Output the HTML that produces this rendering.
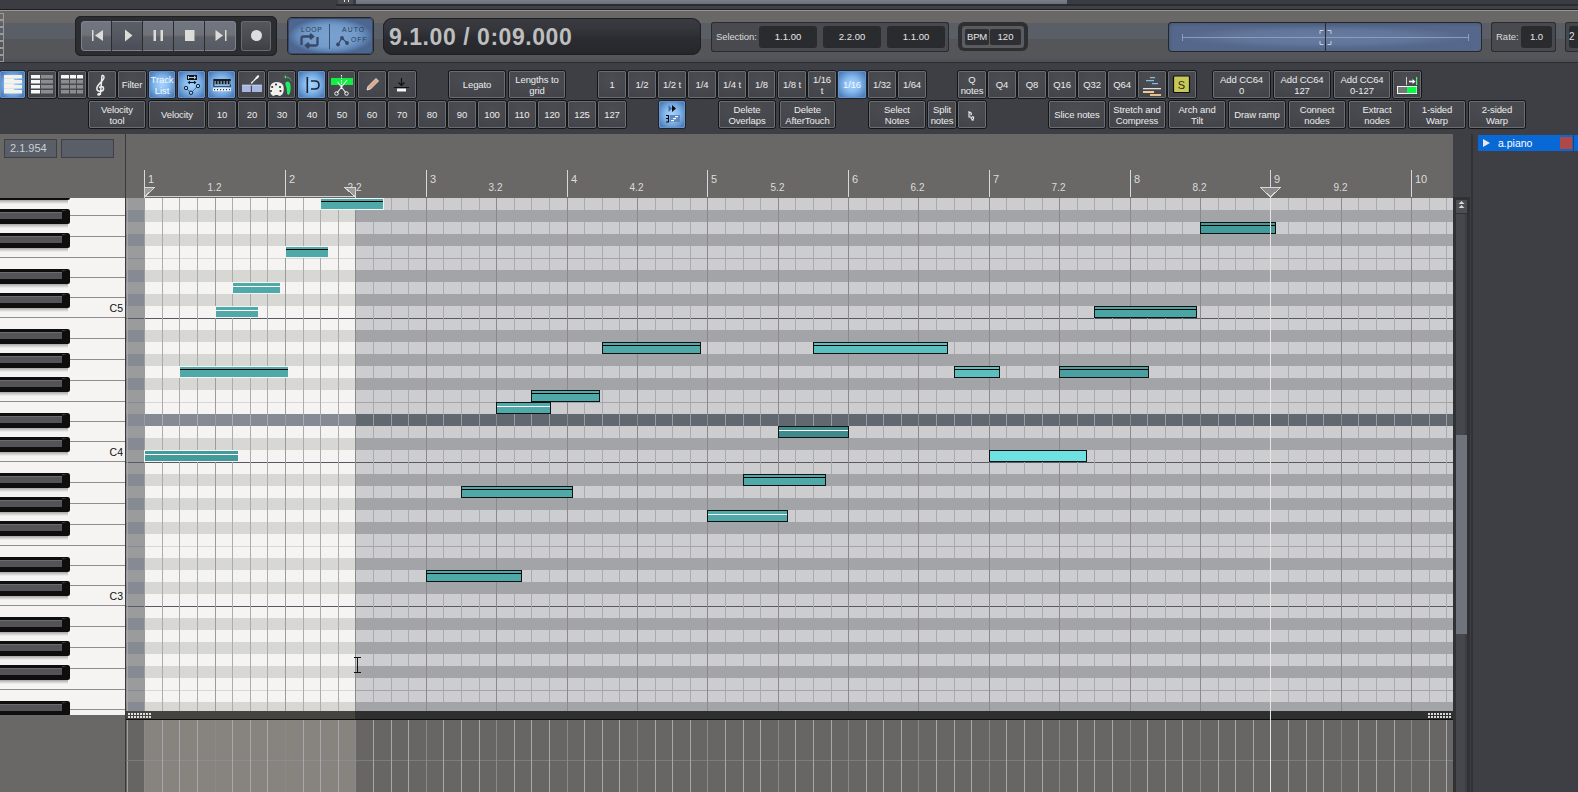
<!DOCTYPE html><html><head><meta charset="utf-8"><style>
*{margin:0;padding:0;box-sizing:border-box}
html,body{width:1578px;height:792px;overflow:hidden;background:#3e3f44;font-family:"Liberation Sans",sans-serif}
div{position:absolute}
.b{background:radial-gradient(ellipse 80% 70% at 50% 30%,#4b4d52 0%,#46484d 60%,#424449 100%);border:1px solid #141517;border-radius:2.5px;box-shadow:inset 0 0 0 1px #686c73;color:#ececec;font-size:9.5px;line-height:11px;letter-spacing:-0.1px;display:flex;align-items:center;justify-content:center;text-align:center;white-space:nowrap}
.b span{display:block}
.act{background:radial-gradient(ellipse 58% 58% at center,#a4d4ff 0%,#88bcf0 45%,#6496d0 80%,#4f7db8 100%);border-color:#1a2230;box-shadow:inset 0 0 0 1px #6a94c8;color:#f4f8ff}
</style></head><body>
<div style="left:0;top:0;width:1578px;height:9px;background:#3c3d42"></div>
<div style="left:336px;top:0;width:1242px;height:9px;background:linear-gradient(#3a3c44 0,#3a3c44 4px,#2b2c31 4px,#2b2c31 6px,#404147 6px)"></div>
<div style="left:0;top:9px;width:1578px;height:1px;background:#1e1f22"></div>
<div style="left:338px;top:0;width:15px;height:4px;background:#4a4c52"></div>
<div style="left:344px;top:0;width:1px;height:2px;background:#e0e0e0"></div><div style="left:348px;top:0;width:1px;height:2px;background:#e0e0e0"></div>
<div style="left:356px;top:0;width:711px;height:4px;background:linear-gradient(#7a7e8a,#6c7078)"></div>
<div style="left:0;top:10px;width:1578px;height:53px;background:linear-gradient(#9a9896 0,#9a9896 1px,#6a6866 1px,#6a6866 13px,#5a5e67 13px,#5a5e67 29px,#555659 29px,#555659 49px,#4e5258 49px,#4e5258 52px,#2a2b2f 52px)"></div>
<div style="left:0;top:63px;width:1578px;height:71px;background:#3e3f44"></div>
<div class="b act" style="left:-1px;top:70px;width:27px;height:29px;"><span></span></div><div class="b" style="left:27px;top:70px;width:30px;height:29px;"><span></span></div><div class="b" style="left:57px;top:70px;width:30px;height:29px;"><span></span></div><div class="b" style="left:87px;top:70px;width:30px;height:29px;"><span></span></div><div class="b" style="left:117px;top:70px;width:30px;height:29px;"><span>Filter</span></div><div class="b act" style="left:148px;top:70px;width:28px;height:29px;"><span>Track<br>List</span></div><div class="b act" style="left:177px;top:70px;width:29px;height:29px;"><span></span></div><div class="b act" style="left:207px;top:70px;width:29px;height:29px;"><span></span></div><div class="b" style="left:237px;top:70px;width:29px;height:29px;"><span></span></div><div class="b" style="left:267px;top:70px;width:29px;height:29px;"><span></span></div><div class="b act" style="left:297px;top:70px;width:29px;height:29px;"><span></span></div><div class="b" style="left:327px;top:70px;width:29px;height:29px;"><span></span></div><div class="b" style="left:357px;top:70px;width:30px;height:29px;"><span></span></div><div class="b" style="left:387px;top:70px;width:30px;height:29px;"><span></span></div><div class="b" style="left:448px;top:70px;width:58px;height:29px;"><span>Legato</span></div><div class="b" style="left:508px;top:70px;width:58px;height:29px;"><span>Lengths to<br>grid</span></div><div class="b" style="left:597px;top:70px;width:30px;height:29px;"><span>1</span></div><div class="b" style="left:627px;top:70px;width:30px;height:29px;"><span>1/2</span></div><div class="b" style="left:657px;top:70px;width:30px;height:29px;"><span>1/2 t</span></div><div class="b" style="left:687px;top:70px;width:30px;height:29px;"><span>1/4</span></div><div class="b" style="left:717px;top:70px;width:30px;height:29px;"><span>1/4 t</span></div><div class="b" style="left:747px;top:70px;width:29px;height:29px;"><span>1/8</span></div><div class="b" style="left:777px;top:70px;width:30px;height:29px;"><span>1/8 t</span></div><div class="b" style="left:807px;top:70px;width:30px;height:29px;"><span>1/16<br>t</span></div><div class="b act" style="left:837px;top:70px;width:30px;height:29px;"><span>1/16</span></div><div class="b" style="left:867px;top:70px;width:30px;height:29px;"><span>1/32</span></div><div class="b" style="left:897px;top:70px;width:30px;height:29px;"><span>1/64</span></div><div class="b" style="left:957px;top:70px;width:30px;height:29px;"><span>Q<br>notes</span></div><div class="b" style="left:987px;top:70px;width:30px;height:29px;"><span>Q4</span></div><div class="b" style="left:1017px;top:70px;width:30px;height:29px;"><span>Q8</span></div><div class="b" style="left:1047px;top:70px;width:30px;height:29px;"><span>Q16</span></div><div class="b" style="left:1077px;top:70px;width:30px;height:29px;"><span>Q32</span></div><div class="b" style="left:1107px;top:70px;width:30px;height:29px;"><span>Q64</span></div><div class="b" style="left:1137px;top:70px;width:30px;height:29px;"><span></span></div><div class="b" style="left:1167px;top:70px;width:30px;height:29px;"><span></span></div><div class="b" style="left:1212px;top:70px;width:59px;height:29px;"><span>Add CC64<br>0</span></div><div class="b" style="left:1273px;top:70px;width:58px;height:29px;"><span>Add CC64<br>127</span></div><div class="b" style="left:1333px;top:70px;width:58px;height:29px;"><span>Add CC64<br>0-127</span></div><div class="b" style="left:1392px;top:70px;width:30px;height:29px;"><span></span></div><div class="b" style="left:88px;top:100px;width:58px;height:29px;"><span>Velocity<br>tool</span></div><div class="b" style="left:148px;top:100px;width:58px;height:29px;"><span>Velocity</span></div><div class="b" style="left:207px;top:100px;width:30px;height:29px;"><span>10</span></div><div class="b" style="left:237px;top:100px;width:30px;height:29px;"><span>20</span></div><div class="b" style="left:267px;top:100px;width:30px;height:29px;"><span>30</span></div><div class="b" style="left:297px;top:100px;width:30px;height:29px;"><span>40</span></div><div class="b" style="left:327px;top:100px;width:30px;height:29px;"><span>50</span></div><div class="b" style="left:357px;top:100px;width:30px;height:29px;"><span>60</span></div><div class="b" style="left:387px;top:100px;width:30px;height:29px;"><span>70</span></div><div class="b" style="left:417px;top:100px;width:30px;height:29px;"><span>80</span></div><div class="b" style="left:447px;top:100px;width:30px;height:29px;"><span>90</span></div><div class="b" style="left:477px;top:100px;width:30px;height:29px;"><span>100</span></div><div class="b" style="left:507px;top:100px;width:30px;height:29px;"><span>110</span></div><div class="b" style="left:537px;top:100px;width:30px;height:29px;"><span>120</span></div><div class="b" style="left:567px;top:100px;width:30px;height:29px;"><span>125</span></div><div class="b" style="left:597px;top:100px;width:30px;height:29px;"><span>127</span></div><div class="b act" style="left:658px;top:100px;width:28px;height:29px;"><span></span></div><div class="b" style="left:718px;top:100px;width:58px;height:29px;"><span>Delete<br>Overlaps</span></div><div class="b" style="left:779px;top:100px;width:57px;height:29px;"><span>Delete<br>AfterTouch</span></div><div class="b" style="left:868px;top:100px;width:58px;height:29px;"><span>Select<br>Notes</span></div><div class="b" style="left:927px;top:100px;width:30px;height:29px;"><span>Split<br>notes</span></div><div class="b" style="left:957px;top:100px;width:30px;height:29px;"><span></span></div><div class="b" style="left:1048px;top:100px;width:58px;height:29px;"><span>Slice notes</span></div><div class="b" style="left:1108px;top:100px;width:58px;height:29px;"><span>Stretch and<br>Compress</span></div><div class="b" style="left:1168px;top:100px;width:58px;height:29px;"><span>Arch and<br>Tilt</span></div><div class="b" style="left:1228px;top:100px;width:58px;height:29px;"><span>Draw ramp</span></div><div class="b" style="left:1288px;top:100px;width:58px;height:29px;"><span>Connect<br>nodes</span></div><div class="b" style="left:1348px;top:100px;width:58px;height:29px;"><span>Extract<br>nodes</span></div><div class="b" style="left:1408px;top:100px;width:58px;height:29px;"><span>1-sided<br>Warp</span></div><div class="b" style="left:1468px;top:100px;width:58px;height:29px;"><span>2-sided<br>Warp</span></div><div style="left:75px;top:16px;width:202px;height:40px;background:#2c2d31;border-radius:6px;box-shadow:inset 0 0 0 1px #1f2023"></div><div style="left:81px;top:21px;width:155px;height:30px;border-radius:4px;background:linear-gradient(#727680 0,#6e727b 45%,#6c6a68 50%,#5c6068 54%,#555961 100%);box-shadow:inset 0 0 0 1px #7e828b"></div><div style="left:112px;top:22px;width:31px;height:28px;background:linear-gradient(#5a5e66 0,#545860 50%,#4a4d55 100%)"></div><div style="left:111px;top:21px;width:1px;height:30px;background:#2a2c31"></div><div style="left:142px;top:21px;width:1px;height:30px;background:#2a2c31"></div><div style="left:173px;top:21px;width:1px;height:30px;background:#2a2c31"></div><div style="left:204px;top:21px;width:1px;height:30px;background:#2a2c31"></div><div style="left:241px;top:21px;width:30px;height:30px;border-radius:3px;background:linear-gradient(#55575c 0,#4a4c51 55%,#3c3e43 100%);box-shadow:inset 0 0 0 1px #666a70"></div><div style="left:288px;top:18px;width:85px;height:36px;border-radius:4px;background:radial-gradient(ellipse 50% 50% at center,#7aa2d0 0%,#739ccb 60%,#6288b8 80%,#4c6690 100%);box-shadow:inset 0 0 0 1px #3a4a66, 0 0 0 1px #24252a"></div><div style="left:329px;top:24px;width:1px;height:25px;background:#3e4e6c"></div><div style="left:383px;top:18px;width:318px;height:37px;border-radius:9px;background:linear-gradient(#3a3c42 0,#34363c 30%,#2a2c31 55%,#25272b 100%);box-shadow:inset 0 0 0 1px #1e1f23"></div><div style="left:389px;top:22px;width:300px;height:30px;font-weight:bold;font-size:23px;line-height:30px;color:#bebebe;white-space:nowrap;letter-spacing:0.55px">9.1.00 / 0:09.000</div><div style="left:711px;top:22px;width:238px;height:30px;border-radius:3px;background:#484a4f;box-shadow:inset 0 0 0 1px #2a2b2f"></div><div style="left:716px;top:22px;width:45px;height:30px;font-size:9.5px;letter-spacing:-0.1px;line-height:30px;color:#dadada">Selection:</div><div style="left:759px;top:26px;width:58px;height:22px;border-radius:3px;background:#2a2b2f;color:#e6e6e6;font-size:9.5px;line-height:22px;text-align:center">1.1.00</div><div style="left:823px;top:26px;width:58px;height:22px;border-radius:3px;background:#2a2b2f;color:#e6e6e6;font-size:9.5px;line-height:22px;text-align:center">2.2.00</div><div style="left:887px;top:26px;width:58px;height:22px;border-radius:3px;background:#2a2b2f;color:#e6e6e6;font-size:9.5px;line-height:22px;text-align:center">1.1.00</div><div style="left:958px;top:22px;width:70px;height:29px;border-radius:6px;background:#2e2f33"></div><div style="left:962px;top:26px;width:62px;height:22px;border-radius:3px;background:#5a5c60"></div><div style="left:965px;top:29px;width:24px;height:16px;border-radius:2px;background:#2e2f33;color:#e6e6e6;font-size:9.5px;letter-spacing:-0.2px;line-height:16px;text-align:center">BPM</div><div style="left:990px;top:29px;width:31px;height:16px;border-radius:2px;background:#2e2f33;color:#e6e6e6;font-size:9.5px;line-height:16px;text-align:center">120</div><div style="left:1168px;top:22px;width:314px;height:30px;border-radius:4px;background:radial-gradient(ellipse 47% 38% at center,#677ba0 0%,#62769b 60%,#5a6d90 85%,#55678a 100%);box-shadow:inset 0 0 0 1px #26272b,inset 2px 2px 3px #485878"></div><div style="left:1182px;top:37px;width:287px;height:1px;background:#8c9cbc"></div><div style="left:1182px;top:34px;width:1px;height:7px;background:#8c9cbc"></div><div style="left:1468px;top:34px;width:1px;height:7px;background:#8c9cbc"></div><div style="left:1325px;top:23px;width:1px;height:29px;background:#2a2b2f"></div><div style="left:1491px;top:22px;width:65px;height:30px;border-radius:3px;background:#484a4f;box-shadow:inset 0 0 0 1px #2a2b2f"></div><div style="left:1496px;top:22px;width:30px;height:30px;font-size:9.5px;line-height:30px;color:#dadada">Rate:</div><div style="left:1521px;top:26px;width:31px;height:22px;border-radius:3px;background:#2a2b2f;color:#e6e6e6;font-size:9.5px;line-height:22px;text-align:center">1.0</div><div style="left:1565px;top:22px;width:20px;height:30px;border-radius:3px;background:#45474c;box-shadow:inset 0 0 0 1px #2a2b2f"></div><div style="left:1569px;top:26px;width:20px;height:22px;border-radius:3px;background:#2a2b2f;color:#e0e0e0;font-size:10px;line-height:22px">2</div><div style="left:1478px;top:135px;width:95px;height:16px;background:#0868d6"></div><div style="left:1560px;top:137px;width:12px;height:12px;background:#b04848"></div><div style="left:1498px;top:135px;width:60px;height:16px;color:#fff;font-size:10.5px;line-height:16px">a.piano</div><div style="left:1574px;top:135px;width:4px;height:16px;background:#0868d6"></div>
<svg width="1578" height="134" style="position:absolute;left:0;top:0" font-family="Liberation Sans, sans-serif"><rect x="-1.5" y="13.5" width="5" height="6" fill="none" stroke="#9a9a9a"/><rect x="-1.5" y="20.5" width="5" height="6" fill="none" stroke="#9a9a9a"/><rect x="-1.5" y="27.5" width="5" height="6" fill="none" stroke="#9a9a9a"/><rect x="-1.5" y="34.5" width="5" height="6" fill="none" stroke="#9a9a9a"/><rect x="-1.5" y="41.5" width="5" height="6" fill="none" stroke="#9a9a9a"/><rect x="-1.5" y="48.5" width="5" height="6" fill="none" stroke="#9a9a9a"/><rect x="-1.5" y="55.5" width="5" height="6" fill="none" stroke="#9a9a9a"/><rect x="92" y="30" width="1.5" height="11" fill="#dcdcd8"/><path d="M95,35.5 L103,30 L103,41 Z" fill="#dcdcd8"/><path d="M125,29.5 L132.5,35.5 L125,41.5 Z" fill="#dcdcd8"/><rect x="153.5" y="30" width="2.5" height="11" fill="#dcdcd8"/><rect x="160.5" y="30" width="2.5" height="11" fill="#dcdcd8"/><rect x="185" y="30" width="9.5" height="11" fill="#dcdcd8"/><path d="M215.5,30 L223,35.5 L215.5,41 Z" fill="#dcdcd8"/><rect x="225" y="30" width="1.5" height="11" fill="#dcdcd8"/><circle cx="256.5" cy="35.5" r="5.5" fill="#dcdce6"/><text x="301" y="32" font-size="6.8" fill="#2e3a52" letter-spacing="0.6">LOOP</text><path d="M301.5,45 L301.5,38.5 Q301.5,36.5 303.5,36.5 L312,36.5 M310,34 L313,36.5 L310,39 M317.5,37 L317.5,43.5 Q317.5,45.5 315.5,45.5 L307,45.5 M309,43 L306,45.5 L309,48" fill="none" stroke="#3a4866" stroke-width="2.3"/><text x="342" y="32" font-size="6.8" fill="#2e3a52" letter-spacing="1.1">AUTO</text><text x="351" y="42" font-size="6.8" fill="#2e3a52" letter-spacing="0.9">OFF</text><path d="M338,44.5 L342,38 L347,43" fill="none" stroke="#3a4866" stroke-width="1.3"/><circle cx="338" cy="44.5" r="1.9" fill="#3a4866"/><circle cx="342" cy="38" r="1.9" fill="#3a4866"/><circle cx="347" cy="43" r="1.9" fill="#3a4866"/><path d="M1320,34 L1320,30.5 L1323.5,30.5 M1327.5,30.5 L1331,30.5 L1331,34 M1331,41 L1331,44.5 L1327.5,44.5 M1323.5,44.5 L1320,44.5 L1320,41" fill="none" stroke="#c8d0e0" stroke-width="1"/><rect x="4" y="75" width="18" height="3.5" fill="#f4f2ec"/><rect x="4" y="78.5" width="10" height="1.5" fill="#f4f2ec"/><rect x="4" y="80" width="18" height="3.5" fill="#f4f2ec"/><rect x="4" y="83.5" width="10" height="1.5" fill="#f4f2ec"/><rect x="4" y="85" width="18" height="3.5" fill="#f4f2ec"/><rect x="4" y="88.5" width="10" height="1.5" fill="#f4f2ec"/><rect x="4" y="90" width="18" height="3.5" fill="#f4f2ec"/><rect x="31" y="75" width="9" height="3.5" fill="#f8f8f8"/><rect x="41" y="75" width="12" height="3.5" fill="#8a8c90"/><rect x="31" y="80" width="9" height="3.5" fill="#f8f8f8"/><rect x="41" y="80" width="12" height="3.5" fill="#8a8c90"/><rect x="31" y="85" width="9" height="3.5" fill="#f8f8f8"/><rect x="41" y="85" width="12" height="3.5" fill="#8a8c90"/><rect x="31" y="90" width="9" height="3.5" fill="#f8f8f8"/><rect x="41" y="90" width="12" height="3.5" fill="#8a8c90"/><rect x="61" y="75" width="8" height="3.5" fill="#f8f8f8"/><rect x="70" y="75" width="6" height="3.5" fill="#f8f8f8"/><rect x="77" y="75" width="6" height="3.5" fill="#f8f8f8"/><rect x="61" y="80" width="8" height="3.5" fill="#8a8c90"/><rect x="70" y="80" width="6" height="3.5" fill="#8a8c90"/><rect x="77" y="80" width="6" height="3.5" fill="#8a8c90"/><rect x="61" y="85" width="8" height="3.5" fill="#8a8c90"/><rect x="70" y="85" width="6" height="3.5" fill="#8a8c90"/><rect x="77" y="85" width="6" height="3.5" fill="#8a8c90"/><rect x="61" y="90" width="8" height="3.5" fill="#8a8c90"/><rect x="70" y="90" width="6" height="3.5" fill="#8a8c90"/><rect x="77" y="90" width="6" height="3.5" fill="#8a8c90"/><path d="M100.3,95 C100.8,90 101.8,80 101.8,77.2 C101.8,74.6 104,74.8 104,77.6 C104,81.2 96.8,84 96.8,88.6 C96.8,92.3 103.6,92.3 103.6,88.6 C103.6,85.9 99.8,85.6 99.4,88.2" fill="none" stroke="#ececec" stroke-width="1.5"/><circle cx="98.8" cy="94.2" r="1.5" fill="#ececec"/><rect x="187" y="75" width="10" height="5" fill="#111"/><path d="M188.5,77.5 L195.5,77.5 M188.5,76 L188.5,79 M194,76 L195.8,77.5 L194,79" stroke="#c8e0f8" stroke-width="0.9" fill="none"/><path d="M188.5,82.5 L195.5,82.5" stroke="#111" stroke-width="1.1"/><path d="M187.5,82.5 L190,80.8 L190,84.2 Z M196.5,82.5 L194,80.8 L194,84.2 Z" fill="#111"/><path d="M187.2,89 L189.8,91.6 M192.3,91.6 L196.8,87.2" fill="none" stroke="#111" stroke-width="0.9" stroke-dasharray="1,0.7"/><circle cx="186" cy="88" r="1.7" fill="#9cccf8" stroke="#111" stroke-width="0.9"/><circle cx="191" cy="92.8" r="1.7" fill="#9cccf8" stroke="#111" stroke-width="0.9"/><circle cx="198" cy="86" r="1.7" fill="#9cccf8" stroke="#111" stroke-width="0.9"/><rect x="213.3" y="79" width="17.5" height="7.7" fill="#1a1c20"/><rect x="214.3" y="84.3" width="15.5" height="1.6" fill="#9cccf8"/><rect x="214.60" y="81" width="1" height="3.5" fill="#9cccf8"/><rect x="217.60" y="81" width="1" height="3.5" fill="#9cccf8"/><rect x="220.60" y="81" width="1" height="3.5" fill="#9cccf8"/><rect x="223.60" y="81" width="1" height="3.5" fill="#9cccf8"/><rect x="226.60" y="81" width="1" height="3.5" fill="#9cccf8"/><rect x="229.60" y="81" width="1" height="3.5" fill="#9cccf8"/><rect x="213" y="88.2" width="18" height="3" fill="#eef4fc"/><circle cx="214.6" cy="89.7" r="0.6" fill="#111"/><circle cx="217.6" cy="89.7" r="0.6" fill="#111"/><circle cx="220.6" cy="89.7" r="0.6" fill="#111"/><circle cx="223.6" cy="89.7" r="0.6" fill="#111"/><circle cx="226.6" cy="89.7" r="0.6" fill="#111"/><circle cx="229.6" cy="89.7" r="0.6" fill="#111"/><rect x="242" y="84.8" width="8.8" height="7.2" fill="#a8b6e2"/><rect x="252" y="84.8" width="10" height="7.2" fill="#a8b6e2"/><rect x="242" y="84.8" width="20" height="0.8" fill="#c8d4f4"/><path d="M251.5,83 L253,81.5 M254,80.5 L258.5,76" stroke="#f4f4f4" stroke-width="1.3" stroke-linecap="round"/><path d="M256,78.5 L258.5,76" stroke="#f4f4f4" stroke-width="2"/><path d="M276.5,82 Q284,82 283.8,89 Q283.5,96 279,96 L278,95 L275,95 L274,96 Q270,96 270,89 Q270,82 276.5,82 Z" fill="#f0f0ec"/><circle cx="276" cy="84.5" r="1.1" fill="#333"/><circle cx="272.2" cy="87" r="1.1" fill="#333"/><circle cx="280" cy="87" r="1.1" fill="#333"/><circle cx="271" cy="91" r="1.1" fill="#333"/><circle cx="280.5" cy="91" r="1.1" fill="#333"/><path d="M286,82 Q290,80 290.5,86 Q291,93 288.5,95 Q287,95.5 287,92 Q287,88 285.5,85 Q285,82.5 286,82 Z" fill="#20f060"/><ellipse cx="285.5" cy="77" rx="0.9" ry="1.4" fill="#40e870"/><circle cx="288" cy="77.5" r="0.7" fill="#40e870"/><circle cx="289.8" cy="78.5" r="0.6" fill="#40e870"/><circle cx="291" cy="80" r="0.6" fill="#40e870"/><rect x="306.5" y="77" width="1.6" height="16" fill="#1c2434"/><path d="M311,81 L315,81 Q319,81 319,85 Q319,89 315,89 L311,89" fill="none" stroke="#1c2434" stroke-width="1.6"/><rect x="331" y="78" width="22" height="7" fill="#10f040"/><path d="M341.5,75 L341.5,89" stroke="#fff" stroke-width="1" stroke-dasharray="1.5,1"/><path d="M337,93 L347,80 M346,93 L337.5,82" stroke="#f0f0f0" stroke-width="1.1"/><circle cx="336.5" cy="93.5" r="1.8" fill="none" stroke="#f0f0f0" stroke-width="1"/><circle cx="346.5" cy="93.5" r="1.8" fill="none" stroke="#f0f0f0" stroke-width="1"/><path d="M367,90 L368,86.5 L376,78.5 L378.5,81 L370.5,89 Z" fill="#e0a888" stroke="#f0f0f0" stroke-width="0.8"/><path d="M401.5,78 L401.5,85 M398.5,82.5 L401.5,85.5 L404.5,82.5" fill="none" stroke="#111" stroke-width="1.2"/><rect x="394" y="87" width="15" height="1" fill="#111"/><rect x="397" y="88.5" width="9" height="3" fill="#f8f8f8"/><rect x="1150" y="77" width="5" height="1.2" fill="#80c0e0"/><rect x="1146" y="80" width="8" height="1.2" fill="#80c0e0"/><rect x="1152" y="83" width="6" height="1.2" fill="#80c0e0"/><rect x="1143" y="88" width="18" height="1.3" fill="#e0e0e0"/><rect x="1143" y="91" width="11" height="2" fill="#f0c890"/><rect x="1150" y="94" width="11" height="2" fill="#e8c090"/><rect x="1173.5" y="76" width="16" height="16.5" rx="1" fill="#c8c858" stroke="#0e0e0e" stroke-width="1.2"/><text x="1181.5" y="89" text-anchor="middle" font-size="11" fill="#2a2a10">S</text><rect x="1406" y="77" width="1" height="8" fill="#d0d0d0"/><path d="M1409,81.5 L1413,81.5" stroke="#f8f8f8" stroke-width="1.6"/><path d="M1412.5,79 L1415.5,81.5 L1412.5,84 Z" fill="#f8f8f8"/><rect x="1416" y="77" width="1.2" height="8" fill="#40ff60"/><rect x="1397.5" y="86.5" width="19" height="7" fill="#777" stroke="#f8f8f8" stroke-width="1"/><rect x="1407" y="87" width="9.5" height="6" fill="#00ff40"/><path d="M668.5,105 L672,108.5 L668.5,112 Z" fill="#4a6a9a"/><path d="M672,105 L676,108.5 L672,112 Z" fill="#0a0a0a"/><path d="M666,115.5 L668.5,115.5 L668.5,122 L666,122 M666,118.5 L668.5,118.5" fill="none" stroke="#0a0a0a" stroke-width="1.2"/><rect x="670" y="115" width="10" height="7" fill="#5f88c0"/><rect x="675" y="116" width="3" height="1.2" fill="#fff"/><rect x="673" y="118" width="3" height="1.2" fill="#fff"/><rect x="671" y="120" width="3" height="1.2" fill="#fff"/><path d="M969,112 L969,117 L971,117 M968.5,111.5 L971,113 Q972,114 970.5,115 M971,119 Q972,116 973.5,117 Q974.5,118.5 971.5,120 L974,120" fill="none" stroke="#f0f0f0" stroke-width="1.1"/><path d="M1483,139 L1490,143 L1483,147 Z" fill="#e8e8e8"/></svg>
<svg width="1578" height="792" style="position:absolute;left:0;top:0" shape-rendering="crispEdges" font-family="Liberation Sans, sans-serif"><defs><linearGradient id="ksh" x1="0" y1="0" x2="0" y2="1"><stop offset="0" stop-color="#a8a8a6"/><stop offset="1" stop-color="#f5f4f2"/></linearGradient></defs><rect x="0" y="134" width="1453" height="64" fill="#6a6866" /><rect x="126" y="198" width="18" height="12" fill="#9a9b9d" /><rect x="144" y="198" width="211" height="12" fill="#f5f4f2" /><rect x="355" y="198" width="1098" height="12" fill="#cdcdd0" /><rect x="126" y="210" width="18" height="12" fill="#858a93" /><rect x="144" y="210" width="211" height="12" fill="#d7d8d3" /><rect x="355" y="210" width="1098" height="12" fill="#a3a4a7" /><rect x="126" y="222" width="18" height="12" fill="#9a9b9d" /><rect x="144" y="222" width="211" height="12" fill="#f5f4f2" /><rect x="355" y="222" width="1098" height="12" fill="#cdcdd0" /><rect x="126" y="234" width="18" height="12" fill="#858a93" /><rect x="144" y="234" width="211" height="12" fill="#d7d8d3" /><rect x="355" y="234" width="1098" height="12" fill="#a3a4a7" /><rect x="126" y="246" width="18" height="12" fill="#9a9b9d" /><rect x="144" y="246" width="211" height="12" fill="#f5f4f2" /><rect x="355" y="246" width="1098" height="12" fill="#cdcdd0" /><rect x="126" y="258" width="18" height="12" fill="#9a9b9d" /><rect x="144" y="258" width="211" height="12" fill="#f5f4f2" /><rect x="355" y="258" width="1098" height="12" fill="#cdcdd0" /><rect x="126" y="270" width="18" height="12" fill="#858a93" /><rect x="144" y="270" width="211" height="12" fill="#d7d8d3" /><rect x="355" y="270" width="1098" height="12" fill="#a3a4a7" /><rect x="126" y="282" width="18" height="12" fill="#9a9b9d" /><rect x="144" y="282" width="211" height="12" fill="#f5f4f2" /><rect x="355" y="282" width="1098" height="12" fill="#cdcdd0" /><rect x="126" y="294" width="18" height="12" fill="#858a93" /><rect x="144" y="294" width="211" height="12" fill="#d7d8d3" /><rect x="355" y="294" width="1098" height="12" fill="#a3a4a7" /><rect x="126" y="306" width="18" height="12" fill="#9a9b9d" /><rect x="144" y="306" width="211" height="12" fill="#f5f4f2" /><rect x="355" y="306" width="1098" height="12" fill="#cdcdd0" /><rect x="126" y="318" width="18" height="12" fill="#9a9b9d" /><rect x="144" y="318" width="211" height="12" fill="#f5f4f2" /><rect x="355" y="318" width="1098" height="12" fill="#cdcdd0" /><rect x="126" y="330" width="18" height="12" fill="#858a93" /><rect x="144" y="330" width="211" height="12" fill="#d7d8d3" /><rect x="355" y="330" width="1098" height="12" fill="#a3a4a7" /><rect x="126" y="342" width="18" height="12" fill="#9a9b9d" /><rect x="144" y="342" width="211" height="12" fill="#f5f4f2" /><rect x="355" y="342" width="1098" height="12" fill="#cdcdd0" /><rect x="126" y="354" width="18" height="12" fill="#858a93" /><rect x="144" y="354" width="211" height="12" fill="#d7d8d3" /><rect x="355" y="354" width="1098" height="12" fill="#a3a4a7" /><rect x="126" y="366" width="18" height="12" fill="#9a9b9d" /><rect x="144" y="366" width="211" height="12" fill="#f5f4f2" /><rect x="355" y="366" width="1098" height="12" fill="#cdcdd0" /><rect x="126" y="378" width="18" height="12" fill="#858a93" /><rect x="144" y="378" width="211" height="12" fill="#d7d8d3" /><rect x="355" y="378" width="1098" height="12" fill="#a3a4a7" /><rect x="126" y="390" width="18" height="12" fill="#9a9b9d" /><rect x="144" y="390" width="211" height="12" fill="#f5f4f2" /><rect x="355" y="390" width="1098" height="12" fill="#cdcdd0" /><rect x="126" y="402" width="18" height="12" fill="#9a9b9d" /><rect x="144" y="402" width="211" height="12" fill="#f5f4f2" /><rect x="355" y="402" width="1098" height="12" fill="#cdcdd0" /><rect x="126" y="414" width="18" height="12" fill="#858a93" /><rect x="144" y="414" width="211" height="12" fill="#858a94" /><rect x="355" y="414" width="1098" height="12" fill="#626870" /><rect x="126" y="426" width="18" height="12" fill="#9a9b9d" /><rect x="144" y="426" width="211" height="12" fill="#f5f4f2" /><rect x="355" y="426" width="1098" height="12" fill="#cdcdd0" /><rect x="126" y="438" width="18" height="12" fill="#858a93" /><rect x="144" y="438" width="211" height="12" fill="#d7d8d3" /><rect x="355" y="438" width="1098" height="12" fill="#a3a4a7" /><rect x="126" y="450" width="18" height="12" fill="#9a9b9d" /><rect x="144" y="450" width="211" height="12" fill="#f5f4f2" /><rect x="355" y="450" width="1098" height="12" fill="#cdcdd0" /><rect x="126" y="462" width="18" height="12" fill="#9a9b9d" /><rect x="144" y="462" width="211" height="12" fill="#f5f4f2" /><rect x="355" y="462" width="1098" height="12" fill="#cdcdd0" /><rect x="126" y="474" width="18" height="12" fill="#858a93" /><rect x="144" y="474" width="211" height="12" fill="#d7d8d3" /><rect x="355" y="474" width="1098" height="12" fill="#a3a4a7" /><rect x="126" y="486" width="18" height="12" fill="#9a9b9d" /><rect x="144" y="486" width="211" height="12" fill="#f5f4f2" /><rect x="355" y="486" width="1098" height="12" fill="#cdcdd0" /><rect x="126" y="498" width="18" height="12" fill="#858a93" /><rect x="144" y="498" width="211" height="12" fill="#d7d8d3" /><rect x="355" y="498" width="1098" height="12" fill="#a3a4a7" /><rect x="126" y="510" width="18" height="12" fill="#9a9b9d" /><rect x="144" y="510" width="211" height="12" fill="#f5f4f2" /><rect x="355" y="510" width="1098" height="12" fill="#cdcdd0" /><rect x="126" y="522" width="18" height="12" fill="#858a93" /><rect x="144" y="522" width="211" height="12" fill="#d7d8d3" /><rect x="355" y="522" width="1098" height="12" fill="#a3a4a7" /><rect x="126" y="534" width="18" height="12" fill="#9a9b9d" /><rect x="144" y="534" width="211" height="12" fill="#f5f4f2" /><rect x="355" y="534" width="1098" height="12" fill="#cdcdd0" /><rect x="126" y="546" width="18" height="12" fill="#9a9b9d" /><rect x="144" y="546" width="211" height="12" fill="#f5f4f2" /><rect x="355" y="546" width="1098" height="12" fill="#cdcdd0" /><rect x="126" y="558" width="18" height="12" fill="#858a93" /><rect x="144" y="558" width="211" height="12" fill="#d7d8d3" /><rect x="355" y="558" width="1098" height="12" fill="#a3a4a7" /><rect x="126" y="570" width="18" height="12" fill="#9a9b9d" /><rect x="144" y="570" width="211" height="12" fill="#f5f4f2" /><rect x="355" y="570" width="1098" height="12" fill="#cdcdd0" /><rect x="126" y="582" width="18" height="12" fill="#858a93" /><rect x="144" y="582" width="211" height="12" fill="#d7d8d3" /><rect x="355" y="582" width="1098" height="12" fill="#a3a4a7" /><rect x="126" y="594" width="18" height="12" fill="#9a9b9d" /><rect x="144" y="594" width="211" height="12" fill="#f5f4f2" /><rect x="355" y="594" width="1098" height="12" fill="#cdcdd0" /><rect x="126" y="606" width="18" height="12" fill="#9a9b9d" /><rect x="144" y="606" width="211" height="12" fill="#f5f4f2" /><rect x="355" y="606" width="1098" height="12" fill="#cdcdd0" /><rect x="126" y="618" width="18" height="12" fill="#858a93" /><rect x="144" y="618" width="211" height="12" fill="#d7d8d3" /><rect x="355" y="618" width="1098" height="12" fill="#a3a4a7" /><rect x="126" y="630" width="18" height="12" fill="#9a9b9d" /><rect x="144" y="630" width="211" height="12" fill="#f5f4f2" /><rect x="355" y="630" width="1098" height="12" fill="#cdcdd0" /><rect x="126" y="642" width="18" height="12" fill="#858a93" /><rect x="144" y="642" width="211" height="12" fill="#d7d8d3" /><rect x="355" y="642" width="1098" height="12" fill="#a3a4a7" /><rect x="126" y="654" width="18" height="12" fill="#9a9b9d" /><rect x="144" y="654" width="211" height="12" fill="#f5f4f2" /><rect x="355" y="654" width="1098" height="12" fill="#cdcdd0" /><rect x="126" y="666" width="18" height="12" fill="#858a93" /><rect x="144" y="666" width="211" height="12" fill="#d7d8d3" /><rect x="355" y="666" width="1098" height="12" fill="#a3a4a7" /><rect x="126" y="678" width="18" height="12" fill="#9a9b9d" /><rect x="144" y="678" width="211" height="12" fill="#f5f4f2" /><rect x="355" y="678" width="1098" height="12" fill="#cdcdd0" /><rect x="126" y="690" width="18" height="12" fill="#9a9b9d" /><rect x="144" y="690" width="211" height="12" fill="#f5f4f2" /><rect x="355" y="690" width="1098" height="12" fill="#cdcdd0" /><rect x="126" y="702" width="18" height="9" fill="#858a93" /><rect x="144" y="702" width="211" height="9" fill="#d7d8d3" /><rect x="355" y="702" width="1098" height="9" fill="#a3a4a7" /><rect x="126" y="258" width="18" height="1" fill="#858a93" /><rect x="144" y="258" width="211" height="1" fill="#d7d8d3" /><rect x="355" y="258" width="1098" height="1" fill="#a3a4a7" /><rect x="126" y="318" width="1327" height="1" fill="#565b63" /><rect x="126" y="402" width="18" height="1" fill="#858a93" /><rect x="144" y="402" width="211" height="1" fill="#d7d8d3" /><rect x="355" y="402" width="1098" height="1" fill="#a3a4a7" /><rect x="126" y="462" width="1327" height="1" fill="#565b63" /><rect x="126" y="546" width="18" height="1" fill="#858a93" /><rect x="144" y="546" width="211" height="1" fill="#d7d8d3" /><rect x="355" y="546" width="1098" height="1" fill="#a3a4a7" /><rect x="126" y="606" width="1327" height="1" fill="#565b63" /><rect x="126" y="690" width="18" height="1" fill="#858a93" /><rect x="144" y="690" width="211" height="1" fill="#d7d8d3" /><rect x="355" y="690" width="1098" height="1" fill="#a3a4a7" /><rect x="127" y="198" width="1" height="513" fill="#a6a6a8" /><rect x="144" y="198" width="1" height="513" fill="#9c9c9c" /><rect x="162" y="198" width="1" height="513" fill="#acacac" /><rect x="179" y="198" width="1" height="513" fill="#acacac" /><rect x="197" y="198" width="1" height="513" fill="#acacac" /><rect x="215" y="198" width="1" height="513" fill="#9c9c9c" /><rect x="232" y="198" width="1" height="513" fill="#acacac" /><rect x="250" y="198" width="1" height="513" fill="#acacac" /><rect x="267" y="198" width="1" height="513" fill="#acacac" /><rect x="285" y="198" width="1" height="513" fill="#9c9c9c" /><rect x="303" y="198" width="1" height="513" fill="#acacac" /><rect x="320" y="198" width="1" height="513" fill="#acacac" /><rect x="338" y="198" width="1" height="513" fill="#acacac" /><rect x="355" y="198" width="1" height="513" fill="#8a8a8c" /><rect x="373" y="198" width="1" height="12" fill="#a9aaae" /><rect x="373" y="222" width="1" height="12" fill="#a9aaae" /><rect x="373" y="246" width="1" height="12" fill="#a9aaae" /><rect x="373" y="258" width="1" height="12" fill="#a9aaae" /><rect x="373" y="282" width="1" height="12" fill="#a9aaae" /><rect x="373" y="306" width="1" height="12" fill="#a9aaae" /><rect x="373" y="318" width="1" height="12" fill="#a9aaae" /><rect x="373" y="342" width="1" height="12" fill="#a9aaae" /><rect x="373" y="366" width="1" height="12" fill="#a9aaae" /><rect x="373" y="390" width="1" height="12" fill="#a9aaae" /><rect x="373" y="402" width="1" height="12" fill="#a9aaae" /><rect x="373" y="414" width="1" height="12" fill="#9a9ca0" /><rect x="373" y="426" width="1" height="12" fill="#a9aaae" /><rect x="373" y="450" width="1" height="12" fill="#a9aaae" /><rect x="373" y="462" width="1" height="12" fill="#a9aaae" /><rect x="373" y="486" width="1" height="12" fill="#a9aaae" /><rect x="373" y="510" width="1" height="12" fill="#a9aaae" /><rect x="373" y="534" width="1" height="12" fill="#a9aaae" /><rect x="373" y="546" width="1" height="12" fill="#a9aaae" /><rect x="373" y="570" width="1" height="12" fill="#a9aaae" /><rect x="373" y="594" width="1" height="12" fill="#a9aaae" /><rect x="373" y="606" width="1" height="12" fill="#a9aaae" /><rect x="373" y="630" width="1" height="12" fill="#a9aaae" /><rect x="373" y="654" width="1" height="12" fill="#a9aaae" /><rect x="373" y="678" width="1" height="12" fill="#a9aaae" /><rect x="373" y="690" width="1" height="12" fill="#a9aaae" /><rect x="391" y="198" width="1" height="12" fill="#a9aaae" /><rect x="391" y="222" width="1" height="12" fill="#a9aaae" /><rect x="391" y="246" width="1" height="12" fill="#a9aaae" /><rect x="391" y="258" width="1" height="12" fill="#a9aaae" /><rect x="391" y="282" width="1" height="12" fill="#a9aaae" /><rect x="391" y="306" width="1" height="12" fill="#a9aaae" /><rect x="391" y="318" width="1" height="12" fill="#a9aaae" /><rect x="391" y="342" width="1" height="12" fill="#a9aaae" /><rect x="391" y="366" width="1" height="12" fill="#a9aaae" /><rect x="391" y="390" width="1" height="12" fill="#a9aaae" /><rect x="391" y="402" width="1" height="12" fill="#a9aaae" /><rect x="391" y="414" width="1" height="12" fill="#9a9ca0" /><rect x="391" y="426" width="1" height="12" fill="#a9aaae" /><rect x="391" y="450" width="1" height="12" fill="#a9aaae" /><rect x="391" y="462" width="1" height="12" fill="#a9aaae" /><rect x="391" y="486" width="1" height="12" fill="#a9aaae" /><rect x="391" y="510" width="1" height="12" fill="#a9aaae" /><rect x="391" y="534" width="1" height="12" fill="#a9aaae" /><rect x="391" y="546" width="1" height="12" fill="#a9aaae" /><rect x="391" y="570" width="1" height="12" fill="#a9aaae" /><rect x="391" y="594" width="1" height="12" fill="#a9aaae" /><rect x="391" y="606" width="1" height="12" fill="#a9aaae" /><rect x="391" y="630" width="1" height="12" fill="#a9aaae" /><rect x="391" y="654" width="1" height="12" fill="#a9aaae" /><rect x="391" y="678" width="1" height="12" fill="#a9aaae" /><rect x="391" y="690" width="1" height="12" fill="#a9aaae" /><rect x="408" y="198" width="1" height="12" fill="#a9aaae" /><rect x="408" y="222" width="1" height="12" fill="#a9aaae" /><rect x="408" y="246" width="1" height="12" fill="#a9aaae" /><rect x="408" y="258" width="1" height="12" fill="#a9aaae" /><rect x="408" y="282" width="1" height="12" fill="#a9aaae" /><rect x="408" y="306" width="1" height="12" fill="#a9aaae" /><rect x="408" y="318" width="1" height="12" fill="#a9aaae" /><rect x="408" y="342" width="1" height="12" fill="#a9aaae" /><rect x="408" y="366" width="1" height="12" fill="#a9aaae" /><rect x="408" y="390" width="1" height="12" fill="#a9aaae" /><rect x="408" y="402" width="1" height="12" fill="#a9aaae" /><rect x="408" y="414" width="1" height="12" fill="#9a9ca0" /><rect x="408" y="426" width="1" height="12" fill="#a9aaae" /><rect x="408" y="450" width="1" height="12" fill="#a9aaae" /><rect x="408" y="462" width="1" height="12" fill="#a9aaae" /><rect x="408" y="486" width="1" height="12" fill="#a9aaae" /><rect x="408" y="510" width="1" height="12" fill="#a9aaae" /><rect x="408" y="534" width="1" height="12" fill="#a9aaae" /><rect x="408" y="546" width="1" height="12" fill="#a9aaae" /><rect x="408" y="570" width="1" height="12" fill="#a9aaae" /><rect x="408" y="594" width="1" height="12" fill="#a9aaae" /><rect x="408" y="606" width="1" height="12" fill="#a9aaae" /><rect x="408" y="630" width="1" height="12" fill="#a9aaae" /><rect x="408" y="654" width="1" height="12" fill="#a9aaae" /><rect x="408" y="678" width="1" height="12" fill="#a9aaae" /><rect x="408" y="690" width="1" height="12" fill="#a9aaae" /><rect x="426" y="198" width="1" height="513" fill="#8a8a8c" /><rect x="443" y="198" width="1" height="12" fill="#a9aaae" /><rect x="443" y="222" width="1" height="12" fill="#a9aaae" /><rect x="443" y="246" width="1" height="12" fill="#a9aaae" /><rect x="443" y="258" width="1" height="12" fill="#a9aaae" /><rect x="443" y="282" width="1" height="12" fill="#a9aaae" /><rect x="443" y="306" width="1" height="12" fill="#a9aaae" /><rect x="443" y="318" width="1" height="12" fill="#a9aaae" /><rect x="443" y="342" width="1" height="12" fill="#a9aaae" /><rect x="443" y="366" width="1" height="12" fill="#a9aaae" /><rect x="443" y="390" width="1" height="12" fill="#a9aaae" /><rect x="443" y="402" width="1" height="12" fill="#a9aaae" /><rect x="443" y="414" width="1" height="12" fill="#9a9ca0" /><rect x="443" y="426" width="1" height="12" fill="#a9aaae" /><rect x="443" y="450" width="1" height="12" fill="#a9aaae" /><rect x="443" y="462" width="1" height="12" fill="#a9aaae" /><rect x="443" y="486" width="1" height="12" fill="#a9aaae" /><rect x="443" y="510" width="1" height="12" fill="#a9aaae" /><rect x="443" y="534" width="1" height="12" fill="#a9aaae" /><rect x="443" y="546" width="1" height="12" fill="#a9aaae" /><rect x="443" y="570" width="1" height="12" fill="#a9aaae" /><rect x="443" y="594" width="1" height="12" fill="#a9aaae" /><rect x="443" y="606" width="1" height="12" fill="#a9aaae" /><rect x="443" y="630" width="1" height="12" fill="#a9aaae" /><rect x="443" y="654" width="1" height="12" fill="#a9aaae" /><rect x="443" y="678" width="1" height="12" fill="#a9aaae" /><rect x="443" y="690" width="1" height="12" fill="#a9aaae" /><rect x="461" y="198" width="1" height="12" fill="#a9aaae" /><rect x="461" y="222" width="1" height="12" fill="#a9aaae" /><rect x="461" y="246" width="1" height="12" fill="#a9aaae" /><rect x="461" y="258" width="1" height="12" fill="#a9aaae" /><rect x="461" y="282" width="1" height="12" fill="#a9aaae" /><rect x="461" y="306" width="1" height="12" fill="#a9aaae" /><rect x="461" y="318" width="1" height="12" fill="#a9aaae" /><rect x="461" y="342" width="1" height="12" fill="#a9aaae" /><rect x="461" y="366" width="1" height="12" fill="#a9aaae" /><rect x="461" y="390" width="1" height="12" fill="#a9aaae" /><rect x="461" y="402" width="1" height="12" fill="#a9aaae" /><rect x="461" y="414" width="1" height="12" fill="#9a9ca0" /><rect x="461" y="426" width="1" height="12" fill="#a9aaae" /><rect x="461" y="450" width="1" height="12" fill="#a9aaae" /><rect x="461" y="462" width="1" height="12" fill="#a9aaae" /><rect x="461" y="486" width="1" height="12" fill="#a9aaae" /><rect x="461" y="510" width="1" height="12" fill="#a9aaae" /><rect x="461" y="534" width="1" height="12" fill="#a9aaae" /><rect x="461" y="546" width="1" height="12" fill="#a9aaae" /><rect x="461" y="570" width="1" height="12" fill="#a9aaae" /><rect x="461" y="594" width="1" height="12" fill="#a9aaae" /><rect x="461" y="606" width="1" height="12" fill="#a9aaae" /><rect x="461" y="630" width="1" height="12" fill="#a9aaae" /><rect x="461" y="654" width="1" height="12" fill="#a9aaae" /><rect x="461" y="678" width="1" height="12" fill="#a9aaae" /><rect x="461" y="690" width="1" height="12" fill="#a9aaae" /><rect x="479" y="198" width="1" height="12" fill="#a9aaae" /><rect x="479" y="222" width="1" height="12" fill="#a9aaae" /><rect x="479" y="246" width="1" height="12" fill="#a9aaae" /><rect x="479" y="258" width="1" height="12" fill="#a9aaae" /><rect x="479" y="282" width="1" height="12" fill="#a9aaae" /><rect x="479" y="306" width="1" height="12" fill="#a9aaae" /><rect x="479" y="318" width="1" height="12" fill="#a9aaae" /><rect x="479" y="342" width="1" height="12" fill="#a9aaae" /><rect x="479" y="366" width="1" height="12" fill="#a9aaae" /><rect x="479" y="390" width="1" height="12" fill="#a9aaae" /><rect x="479" y="402" width="1" height="12" fill="#a9aaae" /><rect x="479" y="414" width="1" height="12" fill="#9a9ca0" /><rect x="479" y="426" width="1" height="12" fill="#a9aaae" /><rect x="479" y="450" width="1" height="12" fill="#a9aaae" /><rect x="479" y="462" width="1" height="12" fill="#a9aaae" /><rect x="479" y="486" width="1" height="12" fill="#a9aaae" /><rect x="479" y="510" width="1" height="12" fill="#a9aaae" /><rect x="479" y="534" width="1" height="12" fill="#a9aaae" /><rect x="479" y="546" width="1" height="12" fill="#a9aaae" /><rect x="479" y="570" width="1" height="12" fill="#a9aaae" /><rect x="479" y="594" width="1" height="12" fill="#a9aaae" /><rect x="479" y="606" width="1" height="12" fill="#a9aaae" /><rect x="479" y="630" width="1" height="12" fill="#a9aaae" /><rect x="479" y="654" width="1" height="12" fill="#a9aaae" /><rect x="479" y="678" width="1" height="12" fill="#a9aaae" /><rect x="479" y="690" width="1" height="12" fill="#a9aaae" /><rect x="496" y="198" width="1" height="513" fill="#8a8a8c" /><rect x="514" y="198" width="1" height="12" fill="#a9aaae" /><rect x="514" y="222" width="1" height="12" fill="#a9aaae" /><rect x="514" y="246" width="1" height="12" fill="#a9aaae" /><rect x="514" y="258" width="1" height="12" fill="#a9aaae" /><rect x="514" y="282" width="1" height="12" fill="#a9aaae" /><rect x="514" y="306" width="1" height="12" fill="#a9aaae" /><rect x="514" y="318" width="1" height="12" fill="#a9aaae" /><rect x="514" y="342" width="1" height="12" fill="#a9aaae" /><rect x="514" y="366" width="1" height="12" fill="#a9aaae" /><rect x="514" y="390" width="1" height="12" fill="#a9aaae" /><rect x="514" y="402" width="1" height="12" fill="#a9aaae" /><rect x="514" y="414" width="1" height="12" fill="#9a9ca0" /><rect x="514" y="426" width="1" height="12" fill="#a9aaae" /><rect x="514" y="450" width="1" height="12" fill="#a9aaae" /><rect x="514" y="462" width="1" height="12" fill="#a9aaae" /><rect x="514" y="486" width="1" height="12" fill="#a9aaae" /><rect x="514" y="510" width="1" height="12" fill="#a9aaae" /><rect x="514" y="534" width="1" height="12" fill="#a9aaae" /><rect x="514" y="546" width="1" height="12" fill="#a9aaae" /><rect x="514" y="570" width="1" height="12" fill="#a9aaae" /><rect x="514" y="594" width="1" height="12" fill="#a9aaae" /><rect x="514" y="606" width="1" height="12" fill="#a9aaae" /><rect x="514" y="630" width="1" height="12" fill="#a9aaae" /><rect x="514" y="654" width="1" height="12" fill="#a9aaae" /><rect x="514" y="678" width="1" height="12" fill="#a9aaae" /><rect x="514" y="690" width="1" height="12" fill="#a9aaae" /><rect x="531" y="198" width="1" height="12" fill="#a9aaae" /><rect x="531" y="222" width="1" height="12" fill="#a9aaae" /><rect x="531" y="246" width="1" height="12" fill="#a9aaae" /><rect x="531" y="258" width="1" height="12" fill="#a9aaae" /><rect x="531" y="282" width="1" height="12" fill="#a9aaae" /><rect x="531" y="306" width="1" height="12" fill="#a9aaae" /><rect x="531" y="318" width="1" height="12" fill="#a9aaae" /><rect x="531" y="342" width="1" height="12" fill="#a9aaae" /><rect x="531" y="366" width="1" height="12" fill="#a9aaae" /><rect x="531" y="390" width="1" height="12" fill="#a9aaae" /><rect x="531" y="402" width="1" height="12" fill="#a9aaae" /><rect x="531" y="414" width="1" height="12" fill="#9a9ca0" /><rect x="531" y="426" width="1" height="12" fill="#a9aaae" /><rect x="531" y="450" width="1" height="12" fill="#a9aaae" /><rect x="531" y="462" width="1" height="12" fill="#a9aaae" /><rect x="531" y="486" width="1" height="12" fill="#a9aaae" /><rect x="531" y="510" width="1" height="12" fill="#a9aaae" /><rect x="531" y="534" width="1" height="12" fill="#a9aaae" /><rect x="531" y="546" width="1" height="12" fill="#a9aaae" /><rect x="531" y="570" width="1" height="12" fill="#a9aaae" /><rect x="531" y="594" width="1" height="12" fill="#a9aaae" /><rect x="531" y="606" width="1" height="12" fill="#a9aaae" /><rect x="531" y="630" width="1" height="12" fill="#a9aaae" /><rect x="531" y="654" width="1" height="12" fill="#a9aaae" /><rect x="531" y="678" width="1" height="12" fill="#a9aaae" /><rect x="531" y="690" width="1" height="12" fill="#a9aaae" /><rect x="549" y="198" width="1" height="12" fill="#a9aaae" /><rect x="549" y="222" width="1" height="12" fill="#a9aaae" /><rect x="549" y="246" width="1" height="12" fill="#a9aaae" /><rect x="549" y="258" width="1" height="12" fill="#a9aaae" /><rect x="549" y="282" width="1" height="12" fill="#a9aaae" /><rect x="549" y="306" width="1" height="12" fill="#a9aaae" /><rect x="549" y="318" width="1" height="12" fill="#a9aaae" /><rect x="549" y="342" width="1" height="12" fill="#a9aaae" /><rect x="549" y="366" width="1" height="12" fill="#a9aaae" /><rect x="549" y="390" width="1" height="12" fill="#a9aaae" /><rect x="549" y="402" width="1" height="12" fill="#a9aaae" /><rect x="549" y="414" width="1" height="12" fill="#9a9ca0" /><rect x="549" y="426" width="1" height="12" fill="#a9aaae" /><rect x="549" y="450" width="1" height="12" fill="#a9aaae" /><rect x="549" y="462" width="1" height="12" fill="#a9aaae" /><rect x="549" y="486" width="1" height="12" fill="#a9aaae" /><rect x="549" y="510" width="1" height="12" fill="#a9aaae" /><rect x="549" y="534" width="1" height="12" fill="#a9aaae" /><rect x="549" y="546" width="1" height="12" fill="#a9aaae" /><rect x="549" y="570" width="1" height="12" fill="#a9aaae" /><rect x="549" y="594" width="1" height="12" fill="#a9aaae" /><rect x="549" y="606" width="1" height="12" fill="#a9aaae" /><rect x="549" y="630" width="1" height="12" fill="#a9aaae" /><rect x="549" y="654" width="1" height="12" fill="#a9aaae" /><rect x="549" y="678" width="1" height="12" fill="#a9aaae" /><rect x="549" y="690" width="1" height="12" fill="#a9aaae" /><rect x="567" y="198" width="1" height="513" fill="#8a8a8c" /><rect x="584" y="198" width="1" height="12" fill="#a9aaae" /><rect x="584" y="222" width="1" height="12" fill="#a9aaae" /><rect x="584" y="246" width="1" height="12" fill="#a9aaae" /><rect x="584" y="258" width="1" height="12" fill="#a9aaae" /><rect x="584" y="282" width="1" height="12" fill="#a9aaae" /><rect x="584" y="306" width="1" height="12" fill="#a9aaae" /><rect x="584" y="318" width="1" height="12" fill="#a9aaae" /><rect x="584" y="342" width="1" height="12" fill="#a9aaae" /><rect x="584" y="366" width="1" height="12" fill="#a9aaae" /><rect x="584" y="390" width="1" height="12" fill="#a9aaae" /><rect x="584" y="402" width="1" height="12" fill="#a9aaae" /><rect x="584" y="414" width="1" height="12" fill="#9a9ca0" /><rect x="584" y="426" width="1" height="12" fill="#a9aaae" /><rect x="584" y="450" width="1" height="12" fill="#a9aaae" /><rect x="584" y="462" width="1" height="12" fill="#a9aaae" /><rect x="584" y="486" width="1" height="12" fill="#a9aaae" /><rect x="584" y="510" width="1" height="12" fill="#a9aaae" /><rect x="584" y="534" width="1" height="12" fill="#a9aaae" /><rect x="584" y="546" width="1" height="12" fill="#a9aaae" /><rect x="584" y="570" width="1" height="12" fill="#a9aaae" /><rect x="584" y="594" width="1" height="12" fill="#a9aaae" /><rect x="584" y="606" width="1" height="12" fill="#a9aaae" /><rect x="584" y="630" width="1" height="12" fill="#a9aaae" /><rect x="584" y="654" width="1" height="12" fill="#a9aaae" /><rect x="584" y="678" width="1" height="12" fill="#a9aaae" /><rect x="584" y="690" width="1" height="12" fill="#a9aaae" /><rect x="602" y="198" width="1" height="12" fill="#a9aaae" /><rect x="602" y="222" width="1" height="12" fill="#a9aaae" /><rect x="602" y="246" width="1" height="12" fill="#a9aaae" /><rect x="602" y="258" width="1" height="12" fill="#a9aaae" /><rect x="602" y="282" width="1" height="12" fill="#a9aaae" /><rect x="602" y="306" width="1" height="12" fill="#a9aaae" /><rect x="602" y="318" width="1" height="12" fill="#a9aaae" /><rect x="602" y="342" width="1" height="12" fill="#a9aaae" /><rect x="602" y="366" width="1" height="12" fill="#a9aaae" /><rect x="602" y="390" width="1" height="12" fill="#a9aaae" /><rect x="602" y="402" width="1" height="12" fill="#a9aaae" /><rect x="602" y="414" width="1" height="12" fill="#9a9ca0" /><rect x="602" y="426" width="1" height="12" fill="#a9aaae" /><rect x="602" y="450" width="1" height="12" fill="#a9aaae" /><rect x="602" y="462" width="1" height="12" fill="#a9aaae" /><rect x="602" y="486" width="1" height="12" fill="#a9aaae" /><rect x="602" y="510" width="1" height="12" fill="#a9aaae" /><rect x="602" y="534" width="1" height="12" fill="#a9aaae" /><rect x="602" y="546" width="1" height="12" fill="#a9aaae" /><rect x="602" y="570" width="1" height="12" fill="#a9aaae" /><rect x="602" y="594" width="1" height="12" fill="#a9aaae" /><rect x="602" y="606" width="1" height="12" fill="#a9aaae" /><rect x="602" y="630" width="1" height="12" fill="#a9aaae" /><rect x="602" y="654" width="1" height="12" fill="#a9aaae" /><rect x="602" y="678" width="1" height="12" fill="#a9aaae" /><rect x="602" y="690" width="1" height="12" fill="#a9aaae" /><rect x="619" y="198" width="1" height="12" fill="#a9aaae" /><rect x="619" y="222" width="1" height="12" fill="#a9aaae" /><rect x="619" y="246" width="1" height="12" fill="#a9aaae" /><rect x="619" y="258" width="1" height="12" fill="#a9aaae" /><rect x="619" y="282" width="1" height="12" fill="#a9aaae" /><rect x="619" y="306" width="1" height="12" fill="#a9aaae" /><rect x="619" y="318" width="1" height="12" fill="#a9aaae" /><rect x="619" y="342" width="1" height="12" fill="#a9aaae" /><rect x="619" y="366" width="1" height="12" fill="#a9aaae" /><rect x="619" y="390" width="1" height="12" fill="#a9aaae" /><rect x="619" y="402" width="1" height="12" fill="#a9aaae" /><rect x="619" y="414" width="1" height="12" fill="#9a9ca0" /><rect x="619" y="426" width="1" height="12" fill="#a9aaae" /><rect x="619" y="450" width="1" height="12" fill="#a9aaae" /><rect x="619" y="462" width="1" height="12" fill="#a9aaae" /><rect x="619" y="486" width="1" height="12" fill="#a9aaae" /><rect x="619" y="510" width="1" height="12" fill="#a9aaae" /><rect x="619" y="534" width="1" height="12" fill="#a9aaae" /><rect x="619" y="546" width="1" height="12" fill="#a9aaae" /><rect x="619" y="570" width="1" height="12" fill="#a9aaae" /><rect x="619" y="594" width="1" height="12" fill="#a9aaae" /><rect x="619" y="606" width="1" height="12" fill="#a9aaae" /><rect x="619" y="630" width="1" height="12" fill="#a9aaae" /><rect x="619" y="654" width="1" height="12" fill="#a9aaae" /><rect x="619" y="678" width="1" height="12" fill="#a9aaae" /><rect x="619" y="690" width="1" height="12" fill="#a9aaae" /><rect x="637" y="198" width="1" height="513" fill="#8a8a8c" /><rect x="655" y="198" width="1" height="12" fill="#a9aaae" /><rect x="655" y="222" width="1" height="12" fill="#a9aaae" /><rect x="655" y="246" width="1" height="12" fill="#a9aaae" /><rect x="655" y="258" width="1" height="12" fill="#a9aaae" /><rect x="655" y="282" width="1" height="12" fill="#a9aaae" /><rect x="655" y="306" width="1" height="12" fill="#a9aaae" /><rect x="655" y="318" width="1" height="12" fill="#a9aaae" /><rect x="655" y="342" width="1" height="12" fill="#a9aaae" /><rect x="655" y="366" width="1" height="12" fill="#a9aaae" /><rect x="655" y="390" width="1" height="12" fill="#a9aaae" /><rect x="655" y="402" width="1" height="12" fill="#a9aaae" /><rect x="655" y="414" width="1" height="12" fill="#9a9ca0" /><rect x="655" y="426" width="1" height="12" fill="#a9aaae" /><rect x="655" y="450" width="1" height="12" fill="#a9aaae" /><rect x="655" y="462" width="1" height="12" fill="#a9aaae" /><rect x="655" y="486" width="1" height="12" fill="#a9aaae" /><rect x="655" y="510" width="1" height="12" fill="#a9aaae" /><rect x="655" y="534" width="1" height="12" fill="#a9aaae" /><rect x="655" y="546" width="1" height="12" fill="#a9aaae" /><rect x="655" y="570" width="1" height="12" fill="#a9aaae" /><rect x="655" y="594" width="1" height="12" fill="#a9aaae" /><rect x="655" y="606" width="1" height="12" fill="#a9aaae" /><rect x="655" y="630" width="1" height="12" fill="#a9aaae" /><rect x="655" y="654" width="1" height="12" fill="#a9aaae" /><rect x="655" y="678" width="1" height="12" fill="#a9aaae" /><rect x="655" y="690" width="1" height="12" fill="#a9aaae" /><rect x="672" y="198" width="1" height="12" fill="#a9aaae" /><rect x="672" y="222" width="1" height="12" fill="#a9aaae" /><rect x="672" y="246" width="1" height="12" fill="#a9aaae" /><rect x="672" y="258" width="1" height="12" fill="#a9aaae" /><rect x="672" y="282" width="1" height="12" fill="#a9aaae" /><rect x="672" y="306" width="1" height="12" fill="#a9aaae" /><rect x="672" y="318" width="1" height="12" fill="#a9aaae" /><rect x="672" y="342" width="1" height="12" fill="#a9aaae" /><rect x="672" y="366" width="1" height="12" fill="#a9aaae" /><rect x="672" y="390" width="1" height="12" fill="#a9aaae" /><rect x="672" y="402" width="1" height="12" fill="#a9aaae" /><rect x="672" y="414" width="1" height="12" fill="#9a9ca0" /><rect x="672" y="426" width="1" height="12" fill="#a9aaae" /><rect x="672" y="450" width="1" height="12" fill="#a9aaae" /><rect x="672" y="462" width="1" height="12" fill="#a9aaae" /><rect x="672" y="486" width="1" height="12" fill="#a9aaae" /><rect x="672" y="510" width="1" height="12" fill="#a9aaae" /><rect x="672" y="534" width="1" height="12" fill="#a9aaae" /><rect x="672" y="546" width="1" height="12" fill="#a9aaae" /><rect x="672" y="570" width="1" height="12" fill="#a9aaae" /><rect x="672" y="594" width="1" height="12" fill="#a9aaae" /><rect x="672" y="606" width="1" height="12" fill="#a9aaae" /><rect x="672" y="630" width="1" height="12" fill="#a9aaae" /><rect x="672" y="654" width="1" height="12" fill="#a9aaae" /><rect x="672" y="678" width="1" height="12" fill="#a9aaae" /><rect x="672" y="690" width="1" height="12" fill="#a9aaae" /><rect x="690" y="198" width="1" height="12" fill="#a9aaae" /><rect x="690" y="222" width="1" height="12" fill="#a9aaae" /><rect x="690" y="246" width="1" height="12" fill="#a9aaae" /><rect x="690" y="258" width="1" height="12" fill="#a9aaae" /><rect x="690" y="282" width="1" height="12" fill="#a9aaae" /><rect x="690" y="306" width="1" height="12" fill="#a9aaae" /><rect x="690" y="318" width="1" height="12" fill="#a9aaae" /><rect x="690" y="342" width="1" height="12" fill="#a9aaae" /><rect x="690" y="366" width="1" height="12" fill="#a9aaae" /><rect x="690" y="390" width="1" height="12" fill="#a9aaae" /><rect x="690" y="402" width="1" height="12" fill="#a9aaae" /><rect x="690" y="414" width="1" height="12" fill="#9a9ca0" /><rect x="690" y="426" width="1" height="12" fill="#a9aaae" /><rect x="690" y="450" width="1" height="12" fill="#a9aaae" /><rect x="690" y="462" width="1" height="12" fill="#a9aaae" /><rect x="690" y="486" width="1" height="12" fill="#a9aaae" /><rect x="690" y="510" width="1" height="12" fill="#a9aaae" /><rect x="690" y="534" width="1" height="12" fill="#a9aaae" /><rect x="690" y="546" width="1" height="12" fill="#a9aaae" /><rect x="690" y="570" width="1" height="12" fill="#a9aaae" /><rect x="690" y="594" width="1" height="12" fill="#a9aaae" /><rect x="690" y="606" width="1" height="12" fill="#a9aaae" /><rect x="690" y="630" width="1" height="12" fill="#a9aaae" /><rect x="690" y="654" width="1" height="12" fill="#a9aaae" /><rect x="690" y="678" width="1" height="12" fill="#a9aaae" /><rect x="690" y="690" width="1" height="12" fill="#a9aaae" /><rect x="707" y="198" width="1" height="513" fill="#8a8a8c" /><rect x="725" y="198" width="1" height="12" fill="#a9aaae" /><rect x="725" y="222" width="1" height="12" fill="#a9aaae" /><rect x="725" y="246" width="1" height="12" fill="#a9aaae" /><rect x="725" y="258" width="1" height="12" fill="#a9aaae" /><rect x="725" y="282" width="1" height="12" fill="#a9aaae" /><rect x="725" y="306" width="1" height="12" fill="#a9aaae" /><rect x="725" y="318" width="1" height="12" fill="#a9aaae" /><rect x="725" y="342" width="1" height="12" fill="#a9aaae" /><rect x="725" y="366" width="1" height="12" fill="#a9aaae" /><rect x="725" y="390" width="1" height="12" fill="#a9aaae" /><rect x="725" y="402" width="1" height="12" fill="#a9aaae" /><rect x="725" y="414" width="1" height="12" fill="#9a9ca0" /><rect x="725" y="426" width="1" height="12" fill="#a9aaae" /><rect x="725" y="450" width="1" height="12" fill="#a9aaae" /><rect x="725" y="462" width="1" height="12" fill="#a9aaae" /><rect x="725" y="486" width="1" height="12" fill="#a9aaae" /><rect x="725" y="510" width="1" height="12" fill="#a9aaae" /><rect x="725" y="534" width="1" height="12" fill="#a9aaae" /><rect x="725" y="546" width="1" height="12" fill="#a9aaae" /><rect x="725" y="570" width="1" height="12" fill="#a9aaae" /><rect x="725" y="594" width="1" height="12" fill="#a9aaae" /><rect x="725" y="606" width="1" height="12" fill="#a9aaae" /><rect x="725" y="630" width="1" height="12" fill="#a9aaae" /><rect x="725" y="654" width="1" height="12" fill="#a9aaae" /><rect x="725" y="678" width="1" height="12" fill="#a9aaae" /><rect x="725" y="690" width="1" height="12" fill="#a9aaae" /><rect x="743" y="198" width="1" height="12" fill="#a9aaae" /><rect x="743" y="222" width="1" height="12" fill="#a9aaae" /><rect x="743" y="246" width="1" height="12" fill="#a9aaae" /><rect x="743" y="258" width="1" height="12" fill="#a9aaae" /><rect x="743" y="282" width="1" height="12" fill="#a9aaae" /><rect x="743" y="306" width="1" height="12" fill="#a9aaae" /><rect x="743" y="318" width="1" height="12" fill="#a9aaae" /><rect x="743" y="342" width="1" height="12" fill="#a9aaae" /><rect x="743" y="366" width="1" height="12" fill="#a9aaae" /><rect x="743" y="390" width="1" height="12" fill="#a9aaae" /><rect x="743" y="402" width="1" height="12" fill="#a9aaae" /><rect x="743" y="414" width="1" height="12" fill="#9a9ca0" /><rect x="743" y="426" width="1" height="12" fill="#a9aaae" /><rect x="743" y="450" width="1" height="12" fill="#a9aaae" /><rect x="743" y="462" width="1" height="12" fill="#a9aaae" /><rect x="743" y="486" width="1" height="12" fill="#a9aaae" /><rect x="743" y="510" width="1" height="12" fill="#a9aaae" /><rect x="743" y="534" width="1" height="12" fill="#a9aaae" /><rect x="743" y="546" width="1" height="12" fill="#a9aaae" /><rect x="743" y="570" width="1" height="12" fill="#a9aaae" /><rect x="743" y="594" width="1" height="12" fill="#a9aaae" /><rect x="743" y="606" width="1" height="12" fill="#a9aaae" /><rect x="743" y="630" width="1" height="12" fill="#a9aaae" /><rect x="743" y="654" width="1" height="12" fill="#a9aaae" /><rect x="743" y="678" width="1" height="12" fill="#a9aaae" /><rect x="743" y="690" width="1" height="12" fill="#a9aaae" /><rect x="760" y="198" width="1" height="12" fill="#a9aaae" /><rect x="760" y="222" width="1" height="12" fill="#a9aaae" /><rect x="760" y="246" width="1" height="12" fill="#a9aaae" /><rect x="760" y="258" width="1" height="12" fill="#a9aaae" /><rect x="760" y="282" width="1" height="12" fill="#a9aaae" /><rect x="760" y="306" width="1" height="12" fill="#a9aaae" /><rect x="760" y="318" width="1" height="12" fill="#a9aaae" /><rect x="760" y="342" width="1" height="12" fill="#a9aaae" /><rect x="760" y="366" width="1" height="12" fill="#a9aaae" /><rect x="760" y="390" width="1" height="12" fill="#a9aaae" /><rect x="760" y="402" width="1" height="12" fill="#a9aaae" /><rect x="760" y="414" width="1" height="12" fill="#9a9ca0" /><rect x="760" y="426" width="1" height="12" fill="#a9aaae" /><rect x="760" y="450" width="1" height="12" fill="#a9aaae" /><rect x="760" y="462" width="1" height="12" fill="#a9aaae" /><rect x="760" y="486" width="1" height="12" fill="#a9aaae" /><rect x="760" y="510" width="1" height="12" fill="#a9aaae" /><rect x="760" y="534" width="1" height="12" fill="#a9aaae" /><rect x="760" y="546" width="1" height="12" fill="#a9aaae" /><rect x="760" y="570" width="1" height="12" fill="#a9aaae" /><rect x="760" y="594" width="1" height="12" fill="#a9aaae" /><rect x="760" y="606" width="1" height="12" fill="#a9aaae" /><rect x="760" y="630" width="1" height="12" fill="#a9aaae" /><rect x="760" y="654" width="1" height="12" fill="#a9aaae" /><rect x="760" y="678" width="1" height="12" fill="#a9aaae" /><rect x="760" y="690" width="1" height="12" fill="#a9aaae" /><rect x="778" y="198" width="1" height="513" fill="#8a8a8c" /><rect x="795" y="198" width="1" height="12" fill="#a9aaae" /><rect x="795" y="222" width="1" height="12" fill="#a9aaae" /><rect x="795" y="246" width="1" height="12" fill="#a9aaae" /><rect x="795" y="258" width="1" height="12" fill="#a9aaae" /><rect x="795" y="282" width="1" height="12" fill="#a9aaae" /><rect x="795" y="306" width="1" height="12" fill="#a9aaae" /><rect x="795" y="318" width="1" height="12" fill="#a9aaae" /><rect x="795" y="342" width="1" height="12" fill="#a9aaae" /><rect x="795" y="366" width="1" height="12" fill="#a9aaae" /><rect x="795" y="390" width="1" height="12" fill="#a9aaae" /><rect x="795" y="402" width="1" height="12" fill="#a9aaae" /><rect x="795" y="414" width="1" height="12" fill="#9a9ca0" /><rect x="795" y="426" width="1" height="12" fill="#a9aaae" /><rect x="795" y="450" width="1" height="12" fill="#a9aaae" /><rect x="795" y="462" width="1" height="12" fill="#a9aaae" /><rect x="795" y="486" width="1" height="12" fill="#a9aaae" /><rect x="795" y="510" width="1" height="12" fill="#a9aaae" /><rect x="795" y="534" width="1" height="12" fill="#a9aaae" /><rect x="795" y="546" width="1" height="12" fill="#a9aaae" /><rect x="795" y="570" width="1" height="12" fill="#a9aaae" /><rect x="795" y="594" width="1" height="12" fill="#a9aaae" /><rect x="795" y="606" width="1" height="12" fill="#a9aaae" /><rect x="795" y="630" width="1" height="12" fill="#a9aaae" /><rect x="795" y="654" width="1" height="12" fill="#a9aaae" /><rect x="795" y="678" width="1" height="12" fill="#a9aaae" /><rect x="795" y="690" width="1" height="12" fill="#a9aaae" /><rect x="813" y="198" width="1" height="12" fill="#a9aaae" /><rect x="813" y="222" width="1" height="12" fill="#a9aaae" /><rect x="813" y="246" width="1" height="12" fill="#a9aaae" /><rect x="813" y="258" width="1" height="12" fill="#a9aaae" /><rect x="813" y="282" width="1" height="12" fill="#a9aaae" /><rect x="813" y="306" width="1" height="12" fill="#a9aaae" /><rect x="813" y="318" width="1" height="12" fill="#a9aaae" /><rect x="813" y="342" width="1" height="12" fill="#a9aaae" /><rect x="813" y="366" width="1" height="12" fill="#a9aaae" /><rect x="813" y="390" width="1" height="12" fill="#a9aaae" /><rect x="813" y="402" width="1" height="12" fill="#a9aaae" /><rect x="813" y="414" width="1" height="12" fill="#9a9ca0" /><rect x="813" y="426" width="1" height="12" fill="#a9aaae" /><rect x="813" y="450" width="1" height="12" fill="#a9aaae" /><rect x="813" y="462" width="1" height="12" fill="#a9aaae" /><rect x="813" y="486" width="1" height="12" fill="#a9aaae" /><rect x="813" y="510" width="1" height="12" fill="#a9aaae" /><rect x="813" y="534" width="1" height="12" fill="#a9aaae" /><rect x="813" y="546" width="1" height="12" fill="#a9aaae" /><rect x="813" y="570" width="1" height="12" fill="#a9aaae" /><rect x="813" y="594" width="1" height="12" fill="#a9aaae" /><rect x="813" y="606" width="1" height="12" fill="#a9aaae" /><rect x="813" y="630" width="1" height="12" fill="#a9aaae" /><rect x="813" y="654" width="1" height="12" fill="#a9aaae" /><rect x="813" y="678" width="1" height="12" fill="#a9aaae" /><rect x="813" y="690" width="1" height="12" fill="#a9aaae" /><rect x="831" y="198" width="1" height="12" fill="#a9aaae" /><rect x="831" y="222" width="1" height="12" fill="#a9aaae" /><rect x="831" y="246" width="1" height="12" fill="#a9aaae" /><rect x="831" y="258" width="1" height="12" fill="#a9aaae" /><rect x="831" y="282" width="1" height="12" fill="#a9aaae" /><rect x="831" y="306" width="1" height="12" fill="#a9aaae" /><rect x="831" y="318" width="1" height="12" fill="#a9aaae" /><rect x="831" y="342" width="1" height="12" fill="#a9aaae" /><rect x="831" y="366" width="1" height="12" fill="#a9aaae" /><rect x="831" y="390" width="1" height="12" fill="#a9aaae" /><rect x="831" y="402" width="1" height="12" fill="#a9aaae" /><rect x="831" y="414" width="1" height="12" fill="#9a9ca0" /><rect x="831" y="426" width="1" height="12" fill="#a9aaae" /><rect x="831" y="450" width="1" height="12" fill="#a9aaae" /><rect x="831" y="462" width="1" height="12" fill="#a9aaae" /><rect x="831" y="486" width="1" height="12" fill="#a9aaae" /><rect x="831" y="510" width="1" height="12" fill="#a9aaae" /><rect x="831" y="534" width="1" height="12" fill="#a9aaae" /><rect x="831" y="546" width="1" height="12" fill="#a9aaae" /><rect x="831" y="570" width="1" height="12" fill="#a9aaae" /><rect x="831" y="594" width="1" height="12" fill="#a9aaae" /><rect x="831" y="606" width="1" height="12" fill="#a9aaae" /><rect x="831" y="630" width="1" height="12" fill="#a9aaae" /><rect x="831" y="654" width="1" height="12" fill="#a9aaae" /><rect x="831" y="678" width="1" height="12" fill="#a9aaae" /><rect x="831" y="690" width="1" height="12" fill="#a9aaae" /><rect x="848" y="198" width="1" height="513" fill="#8a8a8c" /><rect x="866" y="198" width="1" height="12" fill="#a9aaae" /><rect x="866" y="222" width="1" height="12" fill="#a9aaae" /><rect x="866" y="246" width="1" height="12" fill="#a9aaae" /><rect x="866" y="258" width="1" height="12" fill="#a9aaae" /><rect x="866" y="282" width="1" height="12" fill="#a9aaae" /><rect x="866" y="306" width="1" height="12" fill="#a9aaae" /><rect x="866" y="318" width="1" height="12" fill="#a9aaae" /><rect x="866" y="342" width="1" height="12" fill="#a9aaae" /><rect x="866" y="366" width="1" height="12" fill="#a9aaae" /><rect x="866" y="390" width="1" height="12" fill="#a9aaae" /><rect x="866" y="402" width="1" height="12" fill="#a9aaae" /><rect x="866" y="414" width="1" height="12" fill="#9a9ca0" /><rect x="866" y="426" width="1" height="12" fill="#a9aaae" /><rect x="866" y="450" width="1" height="12" fill="#a9aaae" /><rect x="866" y="462" width="1" height="12" fill="#a9aaae" /><rect x="866" y="486" width="1" height="12" fill="#a9aaae" /><rect x="866" y="510" width="1" height="12" fill="#a9aaae" /><rect x="866" y="534" width="1" height="12" fill="#a9aaae" /><rect x="866" y="546" width="1" height="12" fill="#a9aaae" /><rect x="866" y="570" width="1" height="12" fill="#a9aaae" /><rect x="866" y="594" width="1" height="12" fill="#a9aaae" /><rect x="866" y="606" width="1" height="12" fill="#a9aaae" /><rect x="866" y="630" width="1" height="12" fill="#a9aaae" /><rect x="866" y="654" width="1" height="12" fill="#a9aaae" /><rect x="866" y="678" width="1" height="12" fill="#a9aaae" /><rect x="866" y="690" width="1" height="12" fill="#a9aaae" /><rect x="883" y="198" width="1" height="12" fill="#a9aaae" /><rect x="883" y="222" width="1" height="12" fill="#a9aaae" /><rect x="883" y="246" width="1" height="12" fill="#a9aaae" /><rect x="883" y="258" width="1" height="12" fill="#a9aaae" /><rect x="883" y="282" width="1" height="12" fill="#a9aaae" /><rect x="883" y="306" width="1" height="12" fill="#a9aaae" /><rect x="883" y="318" width="1" height="12" fill="#a9aaae" /><rect x="883" y="342" width="1" height="12" fill="#a9aaae" /><rect x="883" y="366" width="1" height="12" fill="#a9aaae" /><rect x="883" y="390" width="1" height="12" fill="#a9aaae" /><rect x="883" y="402" width="1" height="12" fill="#a9aaae" /><rect x="883" y="414" width="1" height="12" fill="#9a9ca0" /><rect x="883" y="426" width="1" height="12" fill="#a9aaae" /><rect x="883" y="450" width="1" height="12" fill="#a9aaae" /><rect x="883" y="462" width="1" height="12" fill="#a9aaae" /><rect x="883" y="486" width="1" height="12" fill="#a9aaae" /><rect x="883" y="510" width="1" height="12" fill="#a9aaae" /><rect x="883" y="534" width="1" height="12" fill="#a9aaae" /><rect x="883" y="546" width="1" height="12" fill="#a9aaae" /><rect x="883" y="570" width="1" height="12" fill="#a9aaae" /><rect x="883" y="594" width="1" height="12" fill="#a9aaae" /><rect x="883" y="606" width="1" height="12" fill="#a9aaae" /><rect x="883" y="630" width="1" height="12" fill="#a9aaae" /><rect x="883" y="654" width="1" height="12" fill="#a9aaae" /><rect x="883" y="678" width="1" height="12" fill="#a9aaae" /><rect x="883" y="690" width="1" height="12" fill="#a9aaae" /><rect x="901" y="198" width="1" height="12" fill="#a9aaae" /><rect x="901" y="222" width="1" height="12" fill="#a9aaae" /><rect x="901" y="246" width="1" height="12" fill="#a9aaae" /><rect x="901" y="258" width="1" height="12" fill="#a9aaae" /><rect x="901" y="282" width="1" height="12" fill="#a9aaae" /><rect x="901" y="306" width="1" height="12" fill="#a9aaae" /><rect x="901" y="318" width="1" height="12" fill="#a9aaae" /><rect x="901" y="342" width="1" height="12" fill="#a9aaae" /><rect x="901" y="366" width="1" height="12" fill="#a9aaae" /><rect x="901" y="390" width="1" height="12" fill="#a9aaae" /><rect x="901" y="402" width="1" height="12" fill="#a9aaae" /><rect x="901" y="414" width="1" height="12" fill="#9a9ca0" /><rect x="901" y="426" width="1" height="12" fill="#a9aaae" /><rect x="901" y="450" width="1" height="12" fill="#a9aaae" /><rect x="901" y="462" width="1" height="12" fill="#a9aaae" /><rect x="901" y="486" width="1" height="12" fill="#a9aaae" /><rect x="901" y="510" width="1" height="12" fill="#a9aaae" /><rect x="901" y="534" width="1" height="12" fill="#a9aaae" /><rect x="901" y="546" width="1" height="12" fill="#a9aaae" /><rect x="901" y="570" width="1" height="12" fill="#a9aaae" /><rect x="901" y="594" width="1" height="12" fill="#a9aaae" /><rect x="901" y="606" width="1" height="12" fill="#a9aaae" /><rect x="901" y="630" width="1" height="12" fill="#a9aaae" /><rect x="901" y="654" width="1" height="12" fill="#a9aaae" /><rect x="901" y="678" width="1" height="12" fill="#a9aaae" /><rect x="901" y="690" width="1" height="12" fill="#a9aaae" /><rect x="918" y="198" width="1" height="513" fill="#8a8a8c" /><rect x="936" y="198" width="1" height="12" fill="#a9aaae" /><rect x="936" y="222" width="1" height="12" fill="#a9aaae" /><rect x="936" y="246" width="1" height="12" fill="#a9aaae" /><rect x="936" y="258" width="1" height="12" fill="#a9aaae" /><rect x="936" y="282" width="1" height="12" fill="#a9aaae" /><rect x="936" y="306" width="1" height="12" fill="#a9aaae" /><rect x="936" y="318" width="1" height="12" fill="#a9aaae" /><rect x="936" y="342" width="1" height="12" fill="#a9aaae" /><rect x="936" y="366" width="1" height="12" fill="#a9aaae" /><rect x="936" y="390" width="1" height="12" fill="#a9aaae" /><rect x="936" y="402" width="1" height="12" fill="#a9aaae" /><rect x="936" y="414" width="1" height="12" fill="#9a9ca0" /><rect x="936" y="426" width="1" height="12" fill="#a9aaae" /><rect x="936" y="450" width="1" height="12" fill="#a9aaae" /><rect x="936" y="462" width="1" height="12" fill="#a9aaae" /><rect x="936" y="486" width="1" height="12" fill="#a9aaae" /><rect x="936" y="510" width="1" height="12" fill="#a9aaae" /><rect x="936" y="534" width="1" height="12" fill="#a9aaae" /><rect x="936" y="546" width="1" height="12" fill="#a9aaae" /><rect x="936" y="570" width="1" height="12" fill="#a9aaae" /><rect x="936" y="594" width="1" height="12" fill="#a9aaae" /><rect x="936" y="606" width="1" height="12" fill="#a9aaae" /><rect x="936" y="630" width="1" height="12" fill="#a9aaae" /><rect x="936" y="654" width="1" height="12" fill="#a9aaae" /><rect x="936" y="678" width="1" height="12" fill="#a9aaae" /><rect x="936" y="690" width="1" height="12" fill="#a9aaae" /><rect x="954" y="198" width="1" height="12" fill="#a9aaae" /><rect x="954" y="222" width="1" height="12" fill="#a9aaae" /><rect x="954" y="246" width="1" height="12" fill="#a9aaae" /><rect x="954" y="258" width="1" height="12" fill="#a9aaae" /><rect x="954" y="282" width="1" height="12" fill="#a9aaae" /><rect x="954" y="306" width="1" height="12" fill="#a9aaae" /><rect x="954" y="318" width="1" height="12" fill="#a9aaae" /><rect x="954" y="342" width="1" height="12" fill="#a9aaae" /><rect x="954" y="366" width="1" height="12" fill="#a9aaae" /><rect x="954" y="390" width="1" height="12" fill="#a9aaae" /><rect x="954" y="402" width="1" height="12" fill="#a9aaae" /><rect x="954" y="414" width="1" height="12" fill="#9a9ca0" /><rect x="954" y="426" width="1" height="12" fill="#a9aaae" /><rect x="954" y="450" width="1" height="12" fill="#a9aaae" /><rect x="954" y="462" width="1" height="12" fill="#a9aaae" /><rect x="954" y="486" width="1" height="12" fill="#a9aaae" /><rect x="954" y="510" width="1" height="12" fill="#a9aaae" /><rect x="954" y="534" width="1" height="12" fill="#a9aaae" /><rect x="954" y="546" width="1" height="12" fill="#a9aaae" /><rect x="954" y="570" width="1" height="12" fill="#a9aaae" /><rect x="954" y="594" width="1" height="12" fill="#a9aaae" /><rect x="954" y="606" width="1" height="12" fill="#a9aaae" /><rect x="954" y="630" width="1" height="12" fill="#a9aaae" /><rect x="954" y="654" width="1" height="12" fill="#a9aaae" /><rect x="954" y="678" width="1" height="12" fill="#a9aaae" /><rect x="954" y="690" width="1" height="12" fill="#a9aaae" /><rect x="971" y="198" width="1" height="12" fill="#a9aaae" /><rect x="971" y="222" width="1" height="12" fill="#a9aaae" /><rect x="971" y="246" width="1" height="12" fill="#a9aaae" /><rect x="971" y="258" width="1" height="12" fill="#a9aaae" /><rect x="971" y="282" width="1" height="12" fill="#a9aaae" /><rect x="971" y="306" width="1" height="12" fill="#a9aaae" /><rect x="971" y="318" width="1" height="12" fill="#a9aaae" /><rect x="971" y="342" width="1" height="12" fill="#a9aaae" /><rect x="971" y="366" width="1" height="12" fill="#a9aaae" /><rect x="971" y="390" width="1" height="12" fill="#a9aaae" /><rect x="971" y="402" width="1" height="12" fill="#a9aaae" /><rect x="971" y="414" width="1" height="12" fill="#9a9ca0" /><rect x="971" y="426" width="1" height="12" fill="#a9aaae" /><rect x="971" y="450" width="1" height="12" fill="#a9aaae" /><rect x="971" y="462" width="1" height="12" fill="#a9aaae" /><rect x="971" y="486" width="1" height="12" fill="#a9aaae" /><rect x="971" y="510" width="1" height="12" fill="#a9aaae" /><rect x="971" y="534" width="1" height="12" fill="#a9aaae" /><rect x="971" y="546" width="1" height="12" fill="#a9aaae" /><rect x="971" y="570" width="1" height="12" fill="#a9aaae" /><rect x="971" y="594" width="1" height="12" fill="#a9aaae" /><rect x="971" y="606" width="1" height="12" fill="#a9aaae" /><rect x="971" y="630" width="1" height="12" fill="#a9aaae" /><rect x="971" y="654" width="1" height="12" fill="#a9aaae" /><rect x="971" y="678" width="1" height="12" fill="#a9aaae" /><rect x="971" y="690" width="1" height="12" fill="#a9aaae" /><rect x="989" y="198" width="1" height="513" fill="#8a8a8c" /><rect x="1006" y="198" width="1" height="12" fill="#a9aaae" /><rect x="1006" y="222" width="1" height="12" fill="#a9aaae" /><rect x="1006" y="246" width="1" height="12" fill="#a9aaae" /><rect x="1006" y="258" width="1" height="12" fill="#a9aaae" /><rect x="1006" y="282" width="1" height="12" fill="#a9aaae" /><rect x="1006" y="306" width="1" height="12" fill="#a9aaae" /><rect x="1006" y="318" width="1" height="12" fill="#a9aaae" /><rect x="1006" y="342" width="1" height="12" fill="#a9aaae" /><rect x="1006" y="366" width="1" height="12" fill="#a9aaae" /><rect x="1006" y="390" width="1" height="12" fill="#a9aaae" /><rect x="1006" y="402" width="1" height="12" fill="#a9aaae" /><rect x="1006" y="414" width="1" height="12" fill="#9a9ca0" /><rect x="1006" y="426" width="1" height="12" fill="#a9aaae" /><rect x="1006" y="450" width="1" height="12" fill="#a9aaae" /><rect x="1006" y="462" width="1" height="12" fill="#a9aaae" /><rect x="1006" y="486" width="1" height="12" fill="#a9aaae" /><rect x="1006" y="510" width="1" height="12" fill="#a9aaae" /><rect x="1006" y="534" width="1" height="12" fill="#a9aaae" /><rect x="1006" y="546" width="1" height="12" fill="#a9aaae" /><rect x="1006" y="570" width="1" height="12" fill="#a9aaae" /><rect x="1006" y="594" width="1" height="12" fill="#a9aaae" /><rect x="1006" y="606" width="1" height="12" fill="#a9aaae" /><rect x="1006" y="630" width="1" height="12" fill="#a9aaae" /><rect x="1006" y="654" width="1" height="12" fill="#a9aaae" /><rect x="1006" y="678" width="1" height="12" fill="#a9aaae" /><rect x="1006" y="690" width="1" height="12" fill="#a9aaae" /><rect x="1024" y="198" width="1" height="12" fill="#a9aaae" /><rect x="1024" y="222" width="1" height="12" fill="#a9aaae" /><rect x="1024" y="246" width="1" height="12" fill="#a9aaae" /><rect x="1024" y="258" width="1" height="12" fill="#a9aaae" /><rect x="1024" y="282" width="1" height="12" fill="#a9aaae" /><rect x="1024" y="306" width="1" height="12" fill="#a9aaae" /><rect x="1024" y="318" width="1" height="12" fill="#a9aaae" /><rect x="1024" y="342" width="1" height="12" fill="#a9aaae" /><rect x="1024" y="366" width="1" height="12" fill="#a9aaae" /><rect x="1024" y="390" width="1" height="12" fill="#a9aaae" /><rect x="1024" y="402" width="1" height="12" fill="#a9aaae" /><rect x="1024" y="414" width="1" height="12" fill="#9a9ca0" /><rect x="1024" y="426" width="1" height="12" fill="#a9aaae" /><rect x="1024" y="450" width="1" height="12" fill="#a9aaae" /><rect x="1024" y="462" width="1" height="12" fill="#a9aaae" /><rect x="1024" y="486" width="1" height="12" fill="#a9aaae" /><rect x="1024" y="510" width="1" height="12" fill="#a9aaae" /><rect x="1024" y="534" width="1" height="12" fill="#a9aaae" /><rect x="1024" y="546" width="1" height="12" fill="#a9aaae" /><rect x="1024" y="570" width="1" height="12" fill="#a9aaae" /><rect x="1024" y="594" width="1" height="12" fill="#a9aaae" /><rect x="1024" y="606" width="1" height="12" fill="#a9aaae" /><rect x="1024" y="630" width="1" height="12" fill="#a9aaae" /><rect x="1024" y="654" width="1" height="12" fill="#a9aaae" /><rect x="1024" y="678" width="1" height="12" fill="#a9aaae" /><rect x="1024" y="690" width="1" height="12" fill="#a9aaae" /><rect x="1042" y="198" width="1" height="12" fill="#a9aaae" /><rect x="1042" y="222" width="1" height="12" fill="#a9aaae" /><rect x="1042" y="246" width="1" height="12" fill="#a9aaae" /><rect x="1042" y="258" width="1" height="12" fill="#a9aaae" /><rect x="1042" y="282" width="1" height="12" fill="#a9aaae" /><rect x="1042" y="306" width="1" height="12" fill="#a9aaae" /><rect x="1042" y="318" width="1" height="12" fill="#a9aaae" /><rect x="1042" y="342" width="1" height="12" fill="#a9aaae" /><rect x="1042" y="366" width="1" height="12" fill="#a9aaae" /><rect x="1042" y="390" width="1" height="12" fill="#a9aaae" /><rect x="1042" y="402" width="1" height="12" fill="#a9aaae" /><rect x="1042" y="414" width="1" height="12" fill="#9a9ca0" /><rect x="1042" y="426" width="1" height="12" fill="#a9aaae" /><rect x="1042" y="450" width="1" height="12" fill="#a9aaae" /><rect x="1042" y="462" width="1" height="12" fill="#a9aaae" /><rect x="1042" y="486" width="1" height="12" fill="#a9aaae" /><rect x="1042" y="510" width="1" height="12" fill="#a9aaae" /><rect x="1042" y="534" width="1" height="12" fill="#a9aaae" /><rect x="1042" y="546" width="1" height="12" fill="#a9aaae" /><rect x="1042" y="570" width="1" height="12" fill="#a9aaae" /><rect x="1042" y="594" width="1" height="12" fill="#a9aaae" /><rect x="1042" y="606" width="1" height="12" fill="#a9aaae" /><rect x="1042" y="630" width="1" height="12" fill="#a9aaae" /><rect x="1042" y="654" width="1" height="12" fill="#a9aaae" /><rect x="1042" y="678" width="1" height="12" fill="#a9aaae" /><rect x="1042" y="690" width="1" height="12" fill="#a9aaae" /><rect x="1059" y="198" width="1" height="513" fill="#8a8a8c" /><rect x="1077" y="198" width="1" height="12" fill="#a9aaae" /><rect x="1077" y="222" width="1" height="12" fill="#a9aaae" /><rect x="1077" y="246" width="1" height="12" fill="#a9aaae" /><rect x="1077" y="258" width="1" height="12" fill="#a9aaae" /><rect x="1077" y="282" width="1" height="12" fill="#a9aaae" /><rect x="1077" y="306" width="1" height="12" fill="#a9aaae" /><rect x="1077" y="318" width="1" height="12" fill="#a9aaae" /><rect x="1077" y="342" width="1" height="12" fill="#a9aaae" /><rect x="1077" y="366" width="1" height="12" fill="#a9aaae" /><rect x="1077" y="390" width="1" height="12" fill="#a9aaae" /><rect x="1077" y="402" width="1" height="12" fill="#a9aaae" /><rect x="1077" y="414" width="1" height="12" fill="#9a9ca0" /><rect x="1077" y="426" width="1" height="12" fill="#a9aaae" /><rect x="1077" y="450" width="1" height="12" fill="#a9aaae" /><rect x="1077" y="462" width="1" height="12" fill="#a9aaae" /><rect x="1077" y="486" width="1" height="12" fill="#a9aaae" /><rect x="1077" y="510" width="1" height="12" fill="#a9aaae" /><rect x="1077" y="534" width="1" height="12" fill="#a9aaae" /><rect x="1077" y="546" width="1" height="12" fill="#a9aaae" /><rect x="1077" y="570" width="1" height="12" fill="#a9aaae" /><rect x="1077" y="594" width="1" height="12" fill="#a9aaae" /><rect x="1077" y="606" width="1" height="12" fill="#a9aaae" /><rect x="1077" y="630" width="1" height="12" fill="#a9aaae" /><rect x="1077" y="654" width="1" height="12" fill="#a9aaae" /><rect x="1077" y="678" width="1" height="12" fill="#a9aaae" /><rect x="1077" y="690" width="1" height="12" fill="#a9aaae" /><rect x="1094" y="198" width="1" height="12" fill="#a9aaae" /><rect x="1094" y="222" width="1" height="12" fill="#a9aaae" /><rect x="1094" y="246" width="1" height="12" fill="#a9aaae" /><rect x="1094" y="258" width="1" height="12" fill="#a9aaae" /><rect x="1094" y="282" width="1" height="12" fill="#a9aaae" /><rect x="1094" y="306" width="1" height="12" fill="#a9aaae" /><rect x="1094" y="318" width="1" height="12" fill="#a9aaae" /><rect x="1094" y="342" width="1" height="12" fill="#a9aaae" /><rect x="1094" y="366" width="1" height="12" fill="#a9aaae" /><rect x="1094" y="390" width="1" height="12" fill="#a9aaae" /><rect x="1094" y="402" width="1" height="12" fill="#a9aaae" /><rect x="1094" y="414" width="1" height="12" fill="#9a9ca0" /><rect x="1094" y="426" width="1" height="12" fill="#a9aaae" /><rect x="1094" y="450" width="1" height="12" fill="#a9aaae" /><rect x="1094" y="462" width="1" height="12" fill="#a9aaae" /><rect x="1094" y="486" width="1" height="12" fill="#a9aaae" /><rect x="1094" y="510" width="1" height="12" fill="#a9aaae" /><rect x="1094" y="534" width="1" height="12" fill="#a9aaae" /><rect x="1094" y="546" width="1" height="12" fill="#a9aaae" /><rect x="1094" y="570" width="1" height="12" fill="#a9aaae" /><rect x="1094" y="594" width="1" height="12" fill="#a9aaae" /><rect x="1094" y="606" width="1" height="12" fill="#a9aaae" /><rect x="1094" y="630" width="1" height="12" fill="#a9aaae" /><rect x="1094" y="654" width="1" height="12" fill="#a9aaae" /><rect x="1094" y="678" width="1" height="12" fill="#a9aaae" /><rect x="1094" y="690" width="1" height="12" fill="#a9aaae" /><rect x="1112" y="198" width="1" height="12" fill="#a9aaae" /><rect x="1112" y="222" width="1" height="12" fill="#a9aaae" /><rect x="1112" y="246" width="1" height="12" fill="#a9aaae" /><rect x="1112" y="258" width="1" height="12" fill="#a9aaae" /><rect x="1112" y="282" width="1" height="12" fill="#a9aaae" /><rect x="1112" y="306" width="1" height="12" fill="#a9aaae" /><rect x="1112" y="318" width="1" height="12" fill="#a9aaae" /><rect x="1112" y="342" width="1" height="12" fill="#a9aaae" /><rect x="1112" y="366" width="1" height="12" fill="#a9aaae" /><rect x="1112" y="390" width="1" height="12" fill="#a9aaae" /><rect x="1112" y="402" width="1" height="12" fill="#a9aaae" /><rect x="1112" y="414" width="1" height="12" fill="#9a9ca0" /><rect x="1112" y="426" width="1" height="12" fill="#a9aaae" /><rect x="1112" y="450" width="1" height="12" fill="#a9aaae" /><rect x="1112" y="462" width="1" height="12" fill="#a9aaae" /><rect x="1112" y="486" width="1" height="12" fill="#a9aaae" /><rect x="1112" y="510" width="1" height="12" fill="#a9aaae" /><rect x="1112" y="534" width="1" height="12" fill="#a9aaae" /><rect x="1112" y="546" width="1" height="12" fill="#a9aaae" /><rect x="1112" y="570" width="1" height="12" fill="#a9aaae" /><rect x="1112" y="594" width="1" height="12" fill="#a9aaae" /><rect x="1112" y="606" width="1" height="12" fill="#a9aaae" /><rect x="1112" y="630" width="1" height="12" fill="#a9aaae" /><rect x="1112" y="654" width="1" height="12" fill="#a9aaae" /><rect x="1112" y="678" width="1" height="12" fill="#a9aaae" /><rect x="1112" y="690" width="1" height="12" fill="#a9aaae" /><rect x="1130" y="198" width="1" height="513" fill="#8a8a8c" /><rect x="1147" y="198" width="1" height="12" fill="#a9aaae" /><rect x="1147" y="222" width="1" height="12" fill="#a9aaae" /><rect x="1147" y="246" width="1" height="12" fill="#a9aaae" /><rect x="1147" y="258" width="1" height="12" fill="#a9aaae" /><rect x="1147" y="282" width="1" height="12" fill="#a9aaae" /><rect x="1147" y="306" width="1" height="12" fill="#a9aaae" /><rect x="1147" y="318" width="1" height="12" fill="#a9aaae" /><rect x="1147" y="342" width="1" height="12" fill="#a9aaae" /><rect x="1147" y="366" width="1" height="12" fill="#a9aaae" /><rect x="1147" y="390" width="1" height="12" fill="#a9aaae" /><rect x="1147" y="402" width="1" height="12" fill="#a9aaae" /><rect x="1147" y="414" width="1" height="12" fill="#9a9ca0" /><rect x="1147" y="426" width="1" height="12" fill="#a9aaae" /><rect x="1147" y="450" width="1" height="12" fill="#a9aaae" /><rect x="1147" y="462" width="1" height="12" fill="#a9aaae" /><rect x="1147" y="486" width="1" height="12" fill="#a9aaae" /><rect x="1147" y="510" width="1" height="12" fill="#a9aaae" /><rect x="1147" y="534" width="1" height="12" fill="#a9aaae" /><rect x="1147" y="546" width="1" height="12" fill="#a9aaae" /><rect x="1147" y="570" width="1" height="12" fill="#a9aaae" /><rect x="1147" y="594" width="1" height="12" fill="#a9aaae" /><rect x="1147" y="606" width="1" height="12" fill="#a9aaae" /><rect x="1147" y="630" width="1" height="12" fill="#a9aaae" /><rect x="1147" y="654" width="1" height="12" fill="#a9aaae" /><rect x="1147" y="678" width="1" height="12" fill="#a9aaae" /><rect x="1147" y="690" width="1" height="12" fill="#a9aaae" /><rect x="1165" y="198" width="1" height="12" fill="#a9aaae" /><rect x="1165" y="222" width="1" height="12" fill="#a9aaae" /><rect x="1165" y="246" width="1" height="12" fill="#a9aaae" /><rect x="1165" y="258" width="1" height="12" fill="#a9aaae" /><rect x="1165" y="282" width="1" height="12" fill="#a9aaae" /><rect x="1165" y="306" width="1" height="12" fill="#a9aaae" /><rect x="1165" y="318" width="1" height="12" fill="#a9aaae" /><rect x="1165" y="342" width="1" height="12" fill="#a9aaae" /><rect x="1165" y="366" width="1" height="12" fill="#a9aaae" /><rect x="1165" y="390" width="1" height="12" fill="#a9aaae" /><rect x="1165" y="402" width="1" height="12" fill="#a9aaae" /><rect x="1165" y="414" width="1" height="12" fill="#9a9ca0" /><rect x="1165" y="426" width="1" height="12" fill="#a9aaae" /><rect x="1165" y="450" width="1" height="12" fill="#a9aaae" /><rect x="1165" y="462" width="1" height="12" fill="#a9aaae" /><rect x="1165" y="486" width="1" height="12" fill="#a9aaae" /><rect x="1165" y="510" width="1" height="12" fill="#a9aaae" /><rect x="1165" y="534" width="1" height="12" fill="#a9aaae" /><rect x="1165" y="546" width="1" height="12" fill="#a9aaae" /><rect x="1165" y="570" width="1" height="12" fill="#a9aaae" /><rect x="1165" y="594" width="1" height="12" fill="#a9aaae" /><rect x="1165" y="606" width="1" height="12" fill="#a9aaae" /><rect x="1165" y="630" width="1" height="12" fill="#a9aaae" /><rect x="1165" y="654" width="1" height="12" fill="#a9aaae" /><rect x="1165" y="678" width="1" height="12" fill="#a9aaae" /><rect x="1165" y="690" width="1" height="12" fill="#a9aaae" /><rect x="1182" y="198" width="1" height="12" fill="#a9aaae" /><rect x="1182" y="222" width="1" height="12" fill="#a9aaae" /><rect x="1182" y="246" width="1" height="12" fill="#a9aaae" /><rect x="1182" y="258" width="1" height="12" fill="#a9aaae" /><rect x="1182" y="282" width="1" height="12" fill="#a9aaae" /><rect x="1182" y="306" width="1" height="12" fill="#a9aaae" /><rect x="1182" y="318" width="1" height="12" fill="#a9aaae" /><rect x="1182" y="342" width="1" height="12" fill="#a9aaae" /><rect x="1182" y="366" width="1" height="12" fill="#a9aaae" /><rect x="1182" y="390" width="1" height="12" fill="#a9aaae" /><rect x="1182" y="402" width="1" height="12" fill="#a9aaae" /><rect x="1182" y="414" width="1" height="12" fill="#9a9ca0" /><rect x="1182" y="426" width="1" height="12" fill="#a9aaae" /><rect x="1182" y="450" width="1" height="12" fill="#a9aaae" /><rect x="1182" y="462" width="1" height="12" fill="#a9aaae" /><rect x="1182" y="486" width="1" height="12" fill="#a9aaae" /><rect x="1182" y="510" width="1" height="12" fill="#a9aaae" /><rect x="1182" y="534" width="1" height="12" fill="#a9aaae" /><rect x="1182" y="546" width="1" height="12" fill="#a9aaae" /><rect x="1182" y="570" width="1" height="12" fill="#a9aaae" /><rect x="1182" y="594" width="1" height="12" fill="#a9aaae" /><rect x="1182" y="606" width="1" height="12" fill="#a9aaae" /><rect x="1182" y="630" width="1" height="12" fill="#a9aaae" /><rect x="1182" y="654" width="1" height="12" fill="#a9aaae" /><rect x="1182" y="678" width="1" height="12" fill="#a9aaae" /><rect x="1182" y="690" width="1" height="12" fill="#a9aaae" /><rect x="1200" y="198" width="1" height="513" fill="#8a8a8c" /><rect x="1218" y="198" width="1" height="12" fill="#a9aaae" /><rect x="1218" y="222" width="1" height="12" fill="#a9aaae" /><rect x="1218" y="246" width="1" height="12" fill="#a9aaae" /><rect x="1218" y="258" width="1" height="12" fill="#a9aaae" /><rect x="1218" y="282" width="1" height="12" fill="#a9aaae" /><rect x="1218" y="306" width="1" height="12" fill="#a9aaae" /><rect x="1218" y="318" width="1" height="12" fill="#a9aaae" /><rect x="1218" y="342" width="1" height="12" fill="#a9aaae" /><rect x="1218" y="366" width="1" height="12" fill="#a9aaae" /><rect x="1218" y="390" width="1" height="12" fill="#a9aaae" /><rect x="1218" y="402" width="1" height="12" fill="#a9aaae" /><rect x="1218" y="414" width="1" height="12" fill="#9a9ca0" /><rect x="1218" y="426" width="1" height="12" fill="#a9aaae" /><rect x="1218" y="450" width="1" height="12" fill="#a9aaae" /><rect x="1218" y="462" width="1" height="12" fill="#a9aaae" /><rect x="1218" y="486" width="1" height="12" fill="#a9aaae" /><rect x="1218" y="510" width="1" height="12" fill="#a9aaae" /><rect x="1218" y="534" width="1" height="12" fill="#a9aaae" /><rect x="1218" y="546" width="1" height="12" fill="#a9aaae" /><rect x="1218" y="570" width="1" height="12" fill="#a9aaae" /><rect x="1218" y="594" width="1" height="12" fill="#a9aaae" /><rect x="1218" y="606" width="1" height="12" fill="#a9aaae" /><rect x="1218" y="630" width="1" height="12" fill="#a9aaae" /><rect x="1218" y="654" width="1" height="12" fill="#a9aaae" /><rect x="1218" y="678" width="1" height="12" fill="#a9aaae" /><rect x="1218" y="690" width="1" height="12" fill="#a9aaae" /><rect x="1235" y="198" width="1" height="12" fill="#a9aaae" /><rect x="1235" y="222" width="1" height="12" fill="#a9aaae" /><rect x="1235" y="246" width="1" height="12" fill="#a9aaae" /><rect x="1235" y="258" width="1" height="12" fill="#a9aaae" /><rect x="1235" y="282" width="1" height="12" fill="#a9aaae" /><rect x="1235" y="306" width="1" height="12" fill="#a9aaae" /><rect x="1235" y="318" width="1" height="12" fill="#a9aaae" /><rect x="1235" y="342" width="1" height="12" fill="#a9aaae" /><rect x="1235" y="366" width="1" height="12" fill="#a9aaae" /><rect x="1235" y="390" width="1" height="12" fill="#a9aaae" /><rect x="1235" y="402" width="1" height="12" fill="#a9aaae" /><rect x="1235" y="414" width="1" height="12" fill="#9a9ca0" /><rect x="1235" y="426" width="1" height="12" fill="#a9aaae" /><rect x="1235" y="450" width="1" height="12" fill="#a9aaae" /><rect x="1235" y="462" width="1" height="12" fill="#a9aaae" /><rect x="1235" y="486" width="1" height="12" fill="#a9aaae" /><rect x="1235" y="510" width="1" height="12" fill="#a9aaae" /><rect x="1235" y="534" width="1" height="12" fill="#a9aaae" /><rect x="1235" y="546" width="1" height="12" fill="#a9aaae" /><rect x="1235" y="570" width="1" height="12" fill="#a9aaae" /><rect x="1235" y="594" width="1" height="12" fill="#a9aaae" /><rect x="1235" y="606" width="1" height="12" fill="#a9aaae" /><rect x="1235" y="630" width="1" height="12" fill="#a9aaae" /><rect x="1235" y="654" width="1" height="12" fill="#a9aaae" /><rect x="1235" y="678" width="1" height="12" fill="#a9aaae" /><rect x="1235" y="690" width="1" height="12" fill="#a9aaae" /><rect x="1253" y="198" width="1" height="12" fill="#a9aaae" /><rect x="1253" y="222" width="1" height="12" fill="#a9aaae" /><rect x="1253" y="246" width="1" height="12" fill="#a9aaae" /><rect x="1253" y="258" width="1" height="12" fill="#a9aaae" /><rect x="1253" y="282" width="1" height="12" fill="#a9aaae" /><rect x="1253" y="306" width="1" height="12" fill="#a9aaae" /><rect x="1253" y="318" width="1" height="12" fill="#a9aaae" /><rect x="1253" y="342" width="1" height="12" fill="#a9aaae" /><rect x="1253" y="366" width="1" height="12" fill="#a9aaae" /><rect x="1253" y="390" width="1" height="12" fill="#a9aaae" /><rect x="1253" y="402" width="1" height="12" fill="#a9aaae" /><rect x="1253" y="414" width="1" height="12" fill="#9a9ca0" /><rect x="1253" y="426" width="1" height="12" fill="#a9aaae" /><rect x="1253" y="450" width="1" height="12" fill="#a9aaae" /><rect x="1253" y="462" width="1" height="12" fill="#a9aaae" /><rect x="1253" y="486" width="1" height="12" fill="#a9aaae" /><rect x="1253" y="510" width="1" height="12" fill="#a9aaae" /><rect x="1253" y="534" width="1" height="12" fill="#a9aaae" /><rect x="1253" y="546" width="1" height="12" fill="#a9aaae" /><rect x="1253" y="570" width="1" height="12" fill="#a9aaae" /><rect x="1253" y="594" width="1" height="12" fill="#a9aaae" /><rect x="1253" y="606" width="1" height="12" fill="#a9aaae" /><rect x="1253" y="630" width="1" height="12" fill="#a9aaae" /><rect x="1253" y="654" width="1" height="12" fill="#a9aaae" /><rect x="1253" y="678" width="1" height="12" fill="#a9aaae" /><rect x="1253" y="690" width="1" height="12" fill="#a9aaae" /><rect x="1270" y="198" width="1" height="513" fill="#8a8a8c" /><rect x="1288" y="198" width="1" height="12" fill="#a9aaae" /><rect x="1288" y="222" width="1" height="12" fill="#a9aaae" /><rect x="1288" y="246" width="1" height="12" fill="#a9aaae" /><rect x="1288" y="258" width="1" height="12" fill="#a9aaae" /><rect x="1288" y="282" width="1" height="12" fill="#a9aaae" /><rect x="1288" y="306" width="1" height="12" fill="#a9aaae" /><rect x="1288" y="318" width="1" height="12" fill="#a9aaae" /><rect x="1288" y="342" width="1" height="12" fill="#a9aaae" /><rect x="1288" y="366" width="1" height="12" fill="#a9aaae" /><rect x="1288" y="390" width="1" height="12" fill="#a9aaae" /><rect x="1288" y="402" width="1" height="12" fill="#a9aaae" /><rect x="1288" y="414" width="1" height="12" fill="#9a9ca0" /><rect x="1288" y="426" width="1" height="12" fill="#a9aaae" /><rect x="1288" y="450" width="1" height="12" fill="#a9aaae" /><rect x="1288" y="462" width="1" height="12" fill="#a9aaae" /><rect x="1288" y="486" width="1" height="12" fill="#a9aaae" /><rect x="1288" y="510" width="1" height="12" fill="#a9aaae" /><rect x="1288" y="534" width="1" height="12" fill="#a9aaae" /><rect x="1288" y="546" width="1" height="12" fill="#a9aaae" /><rect x="1288" y="570" width="1" height="12" fill="#a9aaae" /><rect x="1288" y="594" width="1" height="12" fill="#a9aaae" /><rect x="1288" y="606" width="1" height="12" fill="#a9aaae" /><rect x="1288" y="630" width="1" height="12" fill="#a9aaae" /><rect x="1288" y="654" width="1" height="12" fill="#a9aaae" /><rect x="1288" y="678" width="1" height="12" fill="#a9aaae" /><rect x="1288" y="690" width="1" height="12" fill="#a9aaae" /><rect x="1306" y="198" width="1" height="12" fill="#a9aaae" /><rect x="1306" y="222" width="1" height="12" fill="#a9aaae" /><rect x="1306" y="246" width="1" height="12" fill="#a9aaae" /><rect x="1306" y="258" width="1" height="12" fill="#a9aaae" /><rect x="1306" y="282" width="1" height="12" fill="#a9aaae" /><rect x="1306" y="306" width="1" height="12" fill="#a9aaae" /><rect x="1306" y="318" width="1" height="12" fill="#a9aaae" /><rect x="1306" y="342" width="1" height="12" fill="#a9aaae" /><rect x="1306" y="366" width="1" height="12" fill="#a9aaae" /><rect x="1306" y="390" width="1" height="12" fill="#a9aaae" /><rect x="1306" y="402" width="1" height="12" fill="#a9aaae" /><rect x="1306" y="414" width="1" height="12" fill="#9a9ca0" /><rect x="1306" y="426" width="1" height="12" fill="#a9aaae" /><rect x="1306" y="450" width="1" height="12" fill="#a9aaae" /><rect x="1306" y="462" width="1" height="12" fill="#a9aaae" /><rect x="1306" y="486" width="1" height="12" fill="#a9aaae" /><rect x="1306" y="510" width="1" height="12" fill="#a9aaae" /><rect x="1306" y="534" width="1" height="12" fill="#a9aaae" /><rect x="1306" y="546" width="1" height="12" fill="#a9aaae" /><rect x="1306" y="570" width="1" height="12" fill="#a9aaae" /><rect x="1306" y="594" width="1" height="12" fill="#a9aaae" /><rect x="1306" y="606" width="1" height="12" fill="#a9aaae" /><rect x="1306" y="630" width="1" height="12" fill="#a9aaae" /><rect x="1306" y="654" width="1" height="12" fill="#a9aaae" /><rect x="1306" y="678" width="1" height="12" fill="#a9aaae" /><rect x="1306" y="690" width="1" height="12" fill="#a9aaae" /><rect x="1323" y="198" width="1" height="12" fill="#a9aaae" /><rect x="1323" y="222" width="1" height="12" fill="#a9aaae" /><rect x="1323" y="246" width="1" height="12" fill="#a9aaae" /><rect x="1323" y="258" width="1" height="12" fill="#a9aaae" /><rect x="1323" y="282" width="1" height="12" fill="#a9aaae" /><rect x="1323" y="306" width="1" height="12" fill="#a9aaae" /><rect x="1323" y="318" width="1" height="12" fill="#a9aaae" /><rect x="1323" y="342" width="1" height="12" fill="#a9aaae" /><rect x="1323" y="366" width="1" height="12" fill="#a9aaae" /><rect x="1323" y="390" width="1" height="12" fill="#a9aaae" /><rect x="1323" y="402" width="1" height="12" fill="#a9aaae" /><rect x="1323" y="414" width="1" height="12" fill="#9a9ca0" /><rect x="1323" y="426" width="1" height="12" fill="#a9aaae" /><rect x="1323" y="450" width="1" height="12" fill="#a9aaae" /><rect x="1323" y="462" width="1" height="12" fill="#a9aaae" /><rect x="1323" y="486" width="1" height="12" fill="#a9aaae" /><rect x="1323" y="510" width="1" height="12" fill="#a9aaae" /><rect x="1323" y="534" width="1" height="12" fill="#a9aaae" /><rect x="1323" y="546" width="1" height="12" fill="#a9aaae" /><rect x="1323" y="570" width="1" height="12" fill="#a9aaae" /><rect x="1323" y="594" width="1" height="12" fill="#a9aaae" /><rect x="1323" y="606" width="1" height="12" fill="#a9aaae" /><rect x="1323" y="630" width="1" height="12" fill="#a9aaae" /><rect x="1323" y="654" width="1" height="12" fill="#a9aaae" /><rect x="1323" y="678" width="1" height="12" fill="#a9aaae" /><rect x="1323" y="690" width="1" height="12" fill="#a9aaae" /><rect x="1341" y="198" width="1" height="513" fill="#8a8a8c" /><rect x="1358" y="198" width="1" height="12" fill="#a9aaae" /><rect x="1358" y="222" width="1" height="12" fill="#a9aaae" /><rect x="1358" y="246" width="1" height="12" fill="#a9aaae" /><rect x="1358" y="258" width="1" height="12" fill="#a9aaae" /><rect x="1358" y="282" width="1" height="12" fill="#a9aaae" /><rect x="1358" y="306" width="1" height="12" fill="#a9aaae" /><rect x="1358" y="318" width="1" height="12" fill="#a9aaae" /><rect x="1358" y="342" width="1" height="12" fill="#a9aaae" /><rect x="1358" y="366" width="1" height="12" fill="#a9aaae" /><rect x="1358" y="390" width="1" height="12" fill="#a9aaae" /><rect x="1358" y="402" width="1" height="12" fill="#a9aaae" /><rect x="1358" y="414" width="1" height="12" fill="#9a9ca0" /><rect x="1358" y="426" width="1" height="12" fill="#a9aaae" /><rect x="1358" y="450" width="1" height="12" fill="#a9aaae" /><rect x="1358" y="462" width="1" height="12" fill="#a9aaae" /><rect x="1358" y="486" width="1" height="12" fill="#a9aaae" /><rect x="1358" y="510" width="1" height="12" fill="#a9aaae" /><rect x="1358" y="534" width="1" height="12" fill="#a9aaae" /><rect x="1358" y="546" width="1" height="12" fill="#a9aaae" /><rect x="1358" y="570" width="1" height="12" fill="#a9aaae" /><rect x="1358" y="594" width="1" height="12" fill="#a9aaae" /><rect x="1358" y="606" width="1" height="12" fill="#a9aaae" /><rect x="1358" y="630" width="1" height="12" fill="#a9aaae" /><rect x="1358" y="654" width="1" height="12" fill="#a9aaae" /><rect x="1358" y="678" width="1" height="12" fill="#a9aaae" /><rect x="1358" y="690" width="1" height="12" fill="#a9aaae" /><rect x="1376" y="198" width="1" height="12" fill="#a9aaae" /><rect x="1376" y="222" width="1" height="12" fill="#a9aaae" /><rect x="1376" y="246" width="1" height="12" fill="#a9aaae" /><rect x="1376" y="258" width="1" height="12" fill="#a9aaae" /><rect x="1376" y="282" width="1" height="12" fill="#a9aaae" /><rect x="1376" y="306" width="1" height="12" fill="#a9aaae" /><rect x="1376" y="318" width="1" height="12" fill="#a9aaae" /><rect x="1376" y="342" width="1" height="12" fill="#a9aaae" /><rect x="1376" y="366" width="1" height="12" fill="#a9aaae" /><rect x="1376" y="390" width="1" height="12" fill="#a9aaae" /><rect x="1376" y="402" width="1" height="12" fill="#a9aaae" /><rect x="1376" y="414" width="1" height="12" fill="#9a9ca0" /><rect x="1376" y="426" width="1" height="12" fill="#a9aaae" /><rect x="1376" y="450" width="1" height="12" fill="#a9aaae" /><rect x="1376" y="462" width="1" height="12" fill="#a9aaae" /><rect x="1376" y="486" width="1" height="12" fill="#a9aaae" /><rect x="1376" y="510" width="1" height="12" fill="#a9aaae" /><rect x="1376" y="534" width="1" height="12" fill="#a9aaae" /><rect x="1376" y="546" width="1" height="12" fill="#a9aaae" /><rect x="1376" y="570" width="1" height="12" fill="#a9aaae" /><rect x="1376" y="594" width="1" height="12" fill="#a9aaae" /><rect x="1376" y="606" width="1" height="12" fill="#a9aaae" /><rect x="1376" y="630" width="1" height="12" fill="#a9aaae" /><rect x="1376" y="654" width="1" height="12" fill="#a9aaae" /><rect x="1376" y="678" width="1" height="12" fill="#a9aaae" /><rect x="1376" y="690" width="1" height="12" fill="#a9aaae" /><rect x="1394" y="198" width="1" height="12" fill="#a9aaae" /><rect x="1394" y="222" width="1" height="12" fill="#a9aaae" /><rect x="1394" y="246" width="1" height="12" fill="#a9aaae" /><rect x="1394" y="258" width="1" height="12" fill="#a9aaae" /><rect x="1394" y="282" width="1" height="12" fill="#a9aaae" /><rect x="1394" y="306" width="1" height="12" fill="#a9aaae" /><rect x="1394" y="318" width="1" height="12" fill="#a9aaae" /><rect x="1394" y="342" width="1" height="12" fill="#a9aaae" /><rect x="1394" y="366" width="1" height="12" fill="#a9aaae" /><rect x="1394" y="390" width="1" height="12" fill="#a9aaae" /><rect x="1394" y="402" width="1" height="12" fill="#a9aaae" /><rect x="1394" y="414" width="1" height="12" fill="#9a9ca0" /><rect x="1394" y="426" width="1" height="12" fill="#a9aaae" /><rect x="1394" y="450" width="1" height="12" fill="#a9aaae" /><rect x="1394" y="462" width="1" height="12" fill="#a9aaae" /><rect x="1394" y="486" width="1" height="12" fill="#a9aaae" /><rect x="1394" y="510" width="1" height="12" fill="#a9aaae" /><rect x="1394" y="534" width="1" height="12" fill="#a9aaae" /><rect x="1394" y="546" width="1" height="12" fill="#a9aaae" /><rect x="1394" y="570" width="1" height="12" fill="#a9aaae" /><rect x="1394" y="594" width="1" height="12" fill="#a9aaae" /><rect x="1394" y="606" width="1" height="12" fill="#a9aaae" /><rect x="1394" y="630" width="1" height="12" fill="#a9aaae" /><rect x="1394" y="654" width="1" height="12" fill="#a9aaae" /><rect x="1394" y="678" width="1" height="12" fill="#a9aaae" /><rect x="1394" y="690" width="1" height="12" fill="#a9aaae" /><rect x="1411" y="198" width="1" height="513" fill="#8a8a8c" /><rect x="1429" y="198" width="1" height="12" fill="#a9aaae" /><rect x="1429" y="222" width="1" height="12" fill="#a9aaae" /><rect x="1429" y="246" width="1" height="12" fill="#a9aaae" /><rect x="1429" y="258" width="1" height="12" fill="#a9aaae" /><rect x="1429" y="282" width="1" height="12" fill="#a9aaae" /><rect x="1429" y="306" width="1" height="12" fill="#a9aaae" /><rect x="1429" y="318" width="1" height="12" fill="#a9aaae" /><rect x="1429" y="342" width="1" height="12" fill="#a9aaae" /><rect x="1429" y="366" width="1" height="12" fill="#a9aaae" /><rect x="1429" y="390" width="1" height="12" fill="#a9aaae" /><rect x="1429" y="402" width="1" height="12" fill="#a9aaae" /><rect x="1429" y="414" width="1" height="12" fill="#9a9ca0" /><rect x="1429" y="426" width="1" height="12" fill="#a9aaae" /><rect x="1429" y="450" width="1" height="12" fill="#a9aaae" /><rect x="1429" y="462" width="1" height="12" fill="#a9aaae" /><rect x="1429" y="486" width="1" height="12" fill="#a9aaae" /><rect x="1429" y="510" width="1" height="12" fill="#a9aaae" /><rect x="1429" y="534" width="1" height="12" fill="#a9aaae" /><rect x="1429" y="546" width="1" height="12" fill="#a9aaae" /><rect x="1429" y="570" width="1" height="12" fill="#a9aaae" /><rect x="1429" y="594" width="1" height="12" fill="#a9aaae" /><rect x="1429" y="606" width="1" height="12" fill="#a9aaae" /><rect x="1429" y="630" width="1" height="12" fill="#a9aaae" /><rect x="1429" y="654" width="1" height="12" fill="#a9aaae" /><rect x="1429" y="678" width="1" height="12" fill="#a9aaae" /><rect x="1429" y="690" width="1" height="12" fill="#a9aaae" /><rect x="1446" y="198" width="1" height="12" fill="#a9aaae" /><rect x="1446" y="222" width="1" height="12" fill="#a9aaae" /><rect x="1446" y="246" width="1" height="12" fill="#a9aaae" /><rect x="1446" y="258" width="1" height="12" fill="#a9aaae" /><rect x="1446" y="282" width="1" height="12" fill="#a9aaae" /><rect x="1446" y="306" width="1" height="12" fill="#a9aaae" /><rect x="1446" y="318" width="1" height="12" fill="#a9aaae" /><rect x="1446" y="342" width="1" height="12" fill="#a9aaae" /><rect x="1446" y="366" width="1" height="12" fill="#a9aaae" /><rect x="1446" y="390" width="1" height="12" fill="#a9aaae" /><rect x="1446" y="402" width="1" height="12" fill="#a9aaae" /><rect x="1446" y="414" width="1" height="12" fill="#9a9ca0" /><rect x="1446" y="426" width="1" height="12" fill="#a9aaae" /><rect x="1446" y="450" width="1" height="12" fill="#a9aaae" /><rect x="1446" y="462" width="1" height="12" fill="#a9aaae" /><rect x="1446" y="486" width="1" height="12" fill="#a9aaae" /><rect x="1446" y="510" width="1" height="12" fill="#a9aaae" /><rect x="1446" y="534" width="1" height="12" fill="#a9aaae" /><rect x="1446" y="546" width="1" height="12" fill="#a9aaae" /><rect x="1446" y="570" width="1" height="12" fill="#a9aaae" /><rect x="1446" y="594" width="1" height="12" fill="#a9aaae" /><rect x="1446" y="606" width="1" height="12" fill="#a9aaae" /><rect x="1446" y="630" width="1" height="12" fill="#a9aaae" /><rect x="1446" y="654" width="1" height="12" fill="#a9aaae" /><rect x="1446" y="678" width="1" height="12" fill="#a9aaae" /><rect x="1446" y="690" width="1" height="12" fill="#a9aaae" /><rect x="355" y="198" width="1" height="513" fill="#8a8a8c" /><rect x="320" y="198" width="64" height="12" fill="#f4f4f2" /><rect x="321" y="199" width="62" height="10" fill="#4fa9a9" /><rect x="321" y="201" width="62" height="1" fill="#000" /><rect x="285" y="246" width="44" height="12" fill="#f4f4f2" /><rect x="286" y="247" width="42" height="10" fill="#4fa9a9" /><rect x="286" y="249" width="42" height="1" fill="#000" /><rect x="232" y="282" width="49" height="12" fill="#f4f4f2" /><rect x="233" y="283" width="47" height="10" fill="#4fa9a9" /><rect x="233" y="286" width="47" height="1" fill="#fff" /><rect x="215" y="306" width="44" height="12" fill="#f4f4f2" /><rect x="216" y="307" width="42" height="10" fill="#4fa9a9" /><rect x="216" y="310" width="42" height="1" fill="#fff" /><rect x="179" y="366" width="110" height="12" fill="#f4f4f2" /><rect x="180" y="367" width="108" height="10" fill="#4fa9a9" /><rect x="180" y="369" width="108" height="1" fill="#000" /><rect x="144" y="450" width="95" height="12" fill="#f4f4f2" /><rect x="145" y="451" width="93" height="10" fill="#46999a" /><rect x="145" y="454" width="93" height="1" fill="#fff" /><rect x="426" y="570" width="96" height="12" fill="#111" /><rect x="427" y="571" width="94" height="10" fill="#4fa9a9" /><rect x="427" y="573" width="94" height="1" fill="#000" /><rect x="461" y="486" width="112" height="12" fill="#111" /><rect x="462" y="487" width="110" height="10" fill="#4fa9a9" /><rect x="462" y="489" width="110" height="1" fill="#000" /><rect x="496" y="402" width="55" height="12" fill="#111" /><rect x="497" y="403" width="53" height="10" fill="#4fa9a9" /><rect x="497" y="406" width="53" height="1" fill="#fff" /><rect x="531" y="390" width="69" height="12" fill="#111" /><rect x="532" y="391" width="67" height="10" fill="#4fa9a9" /><rect x="532" y="393" width="67" height="1" fill="#000" /><rect x="602" y="342" width="99" height="12" fill="#111" /><rect x="603" y="343" width="97" height="10" fill="#4fa9a9" /><rect x="603" y="345" width="97" height="1" fill="#000" /><rect x="707" y="510" width="81" height="12" fill="#111" /><rect x="708" y="511" width="79" height="10" fill="#4fa9a9" /><rect x="708" y="514" width="79" height="1" fill="#fff" /><rect x="743" y="474" width="83" height="12" fill="#111" /><rect x="744" y="475" width="81" height="10" fill="#4fa9a9" /><rect x="744" y="477" width="81" height="1" fill="#000" /><rect x="778" y="426" width="71" height="12" fill="#111" /><rect x="779" y="427" width="69" height="10" fill="#3e8b8b" /><rect x="779" y="430" width="69" height="1" fill="#fff" /><rect x="813" y="342" width="135" height="12" fill="#111" /><rect x="814" y="343" width="133" height="10" fill="#5bc0c0" /><rect x="814" y="345" width="133" height="1" fill="#000" /><rect x="954" y="366" width="46" height="12" fill="#111" /><rect x="955" y="367" width="44" height="10" fill="#5bbfbf" /><rect x="955" y="369" width="44" height="1" fill="#000" /><rect x="989" y="450" width="98" height="12" fill="#111" /><rect x="990" y="451" width="96" height="10" fill="#6ee2e2" /><rect x="1059" y="366" width="90" height="12" fill="#111" /><rect x="1060" y="367" width="88" height="10" fill="#4aa0a0" /><rect x="1060" y="369" width="88" height="1" fill="#000" /><rect x="1094" y="306" width="103" height="12" fill="#111" /><rect x="1095" y="307" width="101" height="10" fill="#4aa5a5" /><rect x="1095" y="309" width="101" height="1" fill="#000" /><rect x="1200" y="222" width="76" height="12" fill="#111" /><rect x="1201" y="223" width="74" height="10" fill="#429c9c" /><rect x="1201" y="225" width="74" height="1" fill="#000" /><rect x="1270" y="170" width="1" height="541" fill="#e6e6e0" /><path d="M354,657.5 L361,657.5 M354,672.5 L361,672.5 M357.5,658 L357.5,672" stroke="#111" stroke-width="1" fill="none"/><rect x="0" y="198" width="125" height="517" fill="#f5f4f2" /><rect x="125" y="134" width="1" height="658" fill="#3a3a3e" /><rect x="0" y="317" width="125" height="1" fill="#8e8e8e" /><rect x="0" y="297" width="125" height="1" fill="#8e8e8e" /><rect x="0" y="277" width="125" height="1" fill="#8e8e8e" /><rect x="0" y="257" width="125" height="1" fill="#8e8e8e" /><rect x="0" y="236" width="125" height="1" fill="#8e8e8e" /><rect x="0" y="215" width="125" height="1" fill="#8e8e8e" /><rect x="0" y="461" width="125" height="1" fill="#8e8e8e" /><rect x="0" y="441" width="125" height="1" fill="#8e8e8e" /><rect x="0" y="421" width="125" height="1" fill="#8e8e8e" /><rect x="0" y="401" width="125" height="1" fill="#8e8e8e" /><rect x="0" y="380" width="125" height="1" fill="#8e8e8e" /><rect x="0" y="359" width="125" height="1" fill="#8e8e8e" /><rect x="0" y="338" width="125" height="1" fill="#8e8e8e" /><rect x="0" y="605" width="125" height="1" fill="#8e8e8e" /><rect x="0" y="585" width="125" height="1" fill="#8e8e8e" /><rect x="0" y="565" width="125" height="1" fill="#8e8e8e" /><rect x="0" y="545" width="125" height="1" fill="#8e8e8e" /><rect x="0" y="524" width="125" height="1" fill="#8e8e8e" /><rect x="0" y="503" width="125" height="1" fill="#8e8e8e" /><rect x="0" y="482" width="125" height="1" fill="#8e8e8e" /><rect x="0" y="709" width="125" height="1" fill="#8e8e8e" /><rect x="0" y="689" width="125" height="1" fill="#8e8e8e" /><rect x="0" y="668" width="125" height="1" fill="#8e8e8e" /><rect x="0" y="647" width="125" height="1" fill="#8e8e8e" /><rect x="0" y="626" width="125" height="1" fill="#8e8e8e" /><rect x="0" y="200" width="68" height="4" fill="url(#ksh)"/><rect x="-4" y="185" width="74" height="15" rx="2.5" fill="#0e0e0e" shape-rendering="auto"/><rect x="0" y="187.5" width="62" height="7.5" fill="#545458" /><rect x="0" y="187.5" width="62" height="1" fill="#6c6c70" /><path d="M62,187.5 L67,186 L62,186 Z" fill="#3a3a3c" shape-rendering="auto"/><rect x="0" y="224" width="68" height="4" fill="url(#ksh)"/><rect x="-4" y="209" width="74" height="15" rx="2.5" fill="#0e0e0e" shape-rendering="auto"/><rect x="0" y="211.5" width="62" height="7.5" fill="#545458" /><rect x="0" y="211.5" width="62" height="1" fill="#6c6c70" /><path d="M62,211.5 L67,210 L62,210 Z" fill="#3a3a3c" shape-rendering="auto"/><rect x="0" y="248" width="68" height="4" fill="url(#ksh)"/><rect x="-4" y="233" width="74" height="15" rx="2.5" fill="#0e0e0e" shape-rendering="auto"/><rect x="0" y="235.5" width="62" height="7.5" fill="#545458" /><rect x="0" y="235.5" width="62" height="1" fill="#6c6c70" /><path d="M62,235.5 L67,234 L62,234 Z" fill="#3a3a3c" shape-rendering="auto"/><rect x="0" y="284" width="68" height="4" fill="url(#ksh)"/><rect x="-4" y="269" width="74" height="15" rx="2.5" fill="#0e0e0e" shape-rendering="auto"/><rect x="0" y="271.5" width="62" height="7.5" fill="#545458" /><rect x="0" y="271.5" width="62" height="1" fill="#6c6c70" /><path d="M62,271.5 L67,270 L62,270 Z" fill="#3a3a3c" shape-rendering="auto"/><rect x="0" y="308" width="68" height="4" fill="url(#ksh)"/><rect x="-4" y="293" width="74" height="15" rx="2.5" fill="#0e0e0e" shape-rendering="auto"/><rect x="0" y="295.5" width="62" height="7.5" fill="#545458" /><rect x="0" y="295.5" width="62" height="1" fill="#6c6c70" /><path d="M62,295.5 L67,294 L62,294 Z" fill="#3a3a3c" shape-rendering="auto"/><rect x="0" y="344" width="68" height="4" fill="url(#ksh)"/><rect x="-4" y="329" width="74" height="15" rx="2.5" fill="#0e0e0e" shape-rendering="auto"/><rect x="0" y="331.5" width="62" height="7.5" fill="#545458" /><rect x="0" y="331.5" width="62" height="1" fill="#6c6c70" /><path d="M62,331.5 L67,330 L62,330 Z" fill="#3a3a3c" shape-rendering="auto"/><rect x="0" y="368" width="68" height="4" fill="url(#ksh)"/><rect x="-4" y="353" width="74" height="15" rx="2.5" fill="#0e0e0e" shape-rendering="auto"/><rect x="0" y="355.5" width="62" height="7.5" fill="#545458" /><rect x="0" y="355.5" width="62" height="1" fill="#6c6c70" /><path d="M62,355.5 L67,354 L62,354 Z" fill="#3a3a3c" shape-rendering="auto"/><rect x="0" y="392" width="68" height="4" fill="url(#ksh)"/><rect x="-4" y="377" width="74" height="15" rx="2.5" fill="#0e0e0e" shape-rendering="auto"/><rect x="0" y="379.5" width="62" height="7.5" fill="#545458" /><rect x="0" y="379.5" width="62" height="1" fill="#6c6c70" /><path d="M62,379.5 L67,378 L62,378 Z" fill="#3a3a3c" shape-rendering="auto"/><rect x="0" y="428" width="68" height="4" fill="url(#ksh)"/><rect x="-4" y="413" width="74" height="15" rx="2.5" fill="#0e0e0e" shape-rendering="auto"/><rect x="0" y="415.5" width="62" height="7.5" fill="#545458" /><rect x="0" y="415.5" width="62" height="1" fill="#6c6c70" /><path d="M62,415.5 L67,414 L62,414 Z" fill="#3a3a3c" shape-rendering="auto"/><rect x="0" y="452" width="68" height="4" fill="url(#ksh)"/><rect x="-4" y="437" width="74" height="15" rx="2.5" fill="#0e0e0e" shape-rendering="auto"/><rect x="0" y="439.5" width="62" height="7.5" fill="#545458" /><rect x="0" y="439.5" width="62" height="1" fill="#6c6c70" /><path d="M62,439.5 L67,438 L62,438 Z" fill="#3a3a3c" shape-rendering="auto"/><rect x="0" y="488" width="68" height="4" fill="url(#ksh)"/><rect x="-4" y="473" width="74" height="15" rx="2.5" fill="#0e0e0e" shape-rendering="auto"/><rect x="0" y="475.5" width="62" height="7.5" fill="#545458" /><rect x="0" y="475.5" width="62" height="1" fill="#6c6c70" /><path d="M62,475.5 L67,474 L62,474 Z" fill="#3a3a3c" shape-rendering="auto"/><rect x="0" y="512" width="68" height="4" fill="url(#ksh)"/><rect x="-4" y="497" width="74" height="15" rx="2.5" fill="#0e0e0e" shape-rendering="auto"/><rect x="0" y="499.5" width="62" height="7.5" fill="#545458" /><rect x="0" y="499.5" width="62" height="1" fill="#6c6c70" /><path d="M62,499.5 L67,498 L62,498 Z" fill="#3a3a3c" shape-rendering="auto"/><rect x="0" y="536" width="68" height="4" fill="url(#ksh)"/><rect x="-4" y="521" width="74" height="15" rx="2.5" fill="#0e0e0e" shape-rendering="auto"/><rect x="0" y="523.5" width="62" height="7.5" fill="#545458" /><rect x="0" y="523.5" width="62" height="1" fill="#6c6c70" /><path d="M62,523.5 L67,522 L62,522 Z" fill="#3a3a3c" shape-rendering="auto"/><rect x="0" y="572" width="68" height="4" fill="url(#ksh)"/><rect x="-4" y="557" width="74" height="15" rx="2.5" fill="#0e0e0e" shape-rendering="auto"/><rect x="0" y="559.5" width="62" height="7.5" fill="#545458" /><rect x="0" y="559.5" width="62" height="1" fill="#6c6c70" /><path d="M62,559.5 L67,558 L62,558 Z" fill="#3a3a3c" shape-rendering="auto"/><rect x="0" y="596" width="68" height="4" fill="url(#ksh)"/><rect x="-4" y="581" width="74" height="15" rx="2.5" fill="#0e0e0e" shape-rendering="auto"/><rect x="0" y="583.5" width="62" height="7.5" fill="#545458" /><rect x="0" y="583.5" width="62" height="1" fill="#6c6c70" /><path d="M62,583.5 L67,582 L62,582 Z" fill="#3a3a3c" shape-rendering="auto"/><rect x="0" y="632" width="68" height="4" fill="url(#ksh)"/><rect x="-4" y="617" width="74" height="15" rx="2.5" fill="#0e0e0e" shape-rendering="auto"/><rect x="0" y="619.5" width="62" height="7.5" fill="#545458" /><rect x="0" y="619.5" width="62" height="1" fill="#6c6c70" /><path d="M62,619.5 L67,618 L62,618 Z" fill="#3a3a3c" shape-rendering="auto"/><rect x="0" y="656" width="68" height="4" fill="url(#ksh)"/><rect x="-4" y="641" width="74" height="15" rx="2.5" fill="#0e0e0e" shape-rendering="auto"/><rect x="0" y="643.5" width="62" height="7.5" fill="#545458" /><rect x="0" y="643.5" width="62" height="1" fill="#6c6c70" /><path d="M62,643.5 L67,642 L62,642 Z" fill="#3a3a3c" shape-rendering="auto"/><rect x="0" y="680" width="68" height="4" fill="url(#ksh)"/><rect x="-4" y="665" width="74" height="15" rx="2.5" fill="#0e0e0e" shape-rendering="auto"/><rect x="0" y="667.5" width="62" height="7.5" fill="#545458" /><rect x="0" y="667.5" width="62" height="1" fill="#6c6c70" /><path d="M62,667.5 L67,666 L62,666 Z" fill="#3a3a3c" shape-rendering="auto"/><rect x="0" y="716" width="68" height="4" fill="url(#ksh)"/><rect x="-4" y="701" width="74" height="15" rx="2.5" fill="#0e0e0e" shape-rendering="auto"/><rect x="0" y="703.5" width="62" height="7.5" fill="#545458" /><rect x="0" y="703.5" width="62" height="1" fill="#6c6c70" /><path d="M62,703.5 L67,702 L62,702 Z" fill="#3a3a3c" shape-rendering="auto"/><rect x="0" y="134" width="125" height="64" fill="#6a6866" /><text x="123" y="312" text-anchor="end" font-size="10.5" fill="#111">C5</text><text x="123" y="456" text-anchor="end" font-size="10.5" fill="#111">C4</text><text x="123" y="600" text-anchor="end" font-size="10.5" fill="#111">C3</text><rect x="0" y="715" width="125" height="77" fill="#6a6866" /><rect x="144" y="196" width="211" height="1" fill="#d0d0d0" /><rect x="144" y="170" width="1" height="27" fill="#d8d8d8" /><text x="148" y="183" font-size="11" fill="#dcdcdc">1</text><text x="214.5" y="191.3" text-anchor="middle" font-size="10" fill="#dcdcdc">1.2</text><rect x="285" y="170" width="1" height="27" fill="#d8d8d8" /><text x="289" y="183" font-size="11" fill="#dcdcdc">2</text><text x="354.5" y="191.3" text-anchor="middle" font-size="10" fill="#dcdcdc">2.2</text><rect x="426" y="170" width="1" height="27" fill="#d8d8d8" /><text x="430" y="183" font-size="11" fill="#dcdcdc">3</text><text x="495.5" y="191.3" text-anchor="middle" font-size="10" fill="#dcdcdc">3.2</text><rect x="567" y="170" width="1" height="27" fill="#d8d8d8" /><text x="571" y="183" font-size="11" fill="#dcdcdc">4</text><text x="636.5" y="191.3" text-anchor="middle" font-size="10" fill="#dcdcdc">4.2</text><rect x="707" y="170" width="1" height="27" fill="#d8d8d8" /><text x="711" y="183" font-size="11" fill="#dcdcdc">5</text><text x="777.5" y="191.3" text-anchor="middle" font-size="10" fill="#dcdcdc">5.2</text><rect x="848" y="170" width="1" height="27" fill="#d8d8d8" /><text x="852" y="183" font-size="11" fill="#dcdcdc">6</text><text x="917.5" y="191.3" text-anchor="middle" font-size="10" fill="#dcdcdc">6.2</text><rect x="989" y="170" width="1" height="27" fill="#d8d8d8" /><text x="993" y="183" font-size="11" fill="#dcdcdc">7</text><text x="1058.5" y="191.3" text-anchor="middle" font-size="10" fill="#dcdcdc">7.2</text><rect x="1130" y="170" width="1" height="27" fill="#d8d8d8" /><text x="1134" y="183" font-size="11" fill="#dcdcdc">8</text><text x="1199.5" y="191.3" text-anchor="middle" font-size="10" fill="#dcdcdc">8.2</text><rect x="1270" y="170" width="1" height="27" fill="#d8d8d8" /><text x="1274" y="183" font-size="11" fill="#dcdcdc">9</text><text x="1340.5" y="191.3" text-anchor="middle" font-size="10" fill="#dcdcdc">9.2</text><rect x="1411" y="170" width="1" height="27" fill="#d8d8d8" /><text x="1415" y="183" font-size="11" fill="#dcdcdc">10</text><polygon points="144.5,187 155,187 144.5,197" fill="#9a9a9a" stroke="#d8d8d8" stroke-width="1"/><polygon points="344,187 355.5,187 355.5,197" fill="#9a9a9a" stroke="#d8d8d8" stroke-width="1"/><polygon points="1260,187 1281,187 1270.5,197" fill="#8a8a8a" stroke="#d8d8d8" stroke-width="1"/><rect x="4" y="139" width="52" height="18" fill="#5a5e66" stroke="#3e4046"/><text x="10" y="152" font-size="11" fill="#c8d0d8">2.1.954</text><rect x="61" y="139" width="52" height="18" fill="#5a5e66" stroke="#3e4046"/><rect x="126" y="711" width="1327" height="9" fill="#2f2f2f" /><rect x="126" y="711" width="229" height="8" fill="#46443f" /><rect x="126" y="719" width="1327" height="1" fill="#0e0e0e" /><rect x="128" y="713" width="2" height="2" fill="#e0e0e0" /><rect x="1428" y="713" width="2" height="2" fill="#d8d8d8" /><rect x="128" y="716" width="2" height="2" fill="#e0e0e0" /><rect x="1428" y="716" width="2" height="2" fill="#d8d8d8" /><rect x="131" y="713" width="2" height="2" fill="#e0e0e0" /><rect x="1431" y="713" width="2" height="2" fill="#d8d8d8" /><rect x="131" y="716" width="2" height="2" fill="#e0e0e0" /><rect x="1431" y="716" width="2" height="2" fill="#d8d8d8" /><rect x="134" y="713" width="2" height="2" fill="#e0e0e0" /><rect x="1434" y="713" width="2" height="2" fill="#d8d8d8" /><rect x="134" y="716" width="2" height="2" fill="#e0e0e0" /><rect x="1434" y="716" width="2" height="2" fill="#d8d8d8" /><rect x="137" y="713" width="2" height="2" fill="#e0e0e0" /><rect x="1437" y="713" width="2" height="2" fill="#d8d8d8" /><rect x="137" y="716" width="2" height="2" fill="#e0e0e0" /><rect x="1437" y="716" width="2" height="2" fill="#d8d8d8" /><rect x="140" y="713" width="2" height="2" fill="#e0e0e0" /><rect x="1440" y="713" width="2" height="2" fill="#d8d8d8" /><rect x="140" y="716" width="2" height="2" fill="#e0e0e0" /><rect x="1440" y="716" width="2" height="2" fill="#d8d8d8" /><rect x="143" y="713" width="2" height="2" fill="#e0e0e0" /><rect x="1443" y="713" width="2" height="2" fill="#d8d8d8" /><rect x="143" y="716" width="2" height="2" fill="#e0e0e0" /><rect x="1443" y="716" width="2" height="2" fill="#d8d8d8" /><rect x="146" y="713" width="2" height="2" fill="#e0e0e0" /><rect x="1446" y="713" width="2" height="2" fill="#d8d8d8" /><rect x="146" y="716" width="2" height="2" fill="#e0e0e0" /><rect x="1446" y="716" width="2" height="2" fill="#d8d8d8" /><rect x="149" y="713" width="2" height="2" fill="#e0e0e0" /><rect x="1449" y="713" width="2" height="2" fill="#d8d8d8" /><rect x="149" y="716" width="2" height="2" fill="#e0e0e0" /><rect x="1449" y="716" width="2" height="2" fill="#d8d8d8" /><rect x="126" y="720" width="18" height="72" fill="#676563" /><rect x="127" y="720" width="1" height="72" fill="#a0a0a0" /><rect x="144" y="720" width="211" height="72" fill="#878480" /><rect x="355" y="720" width="1098" height="72" fill="#686664" /><rect x="126" y="760" width="1327" height="1" fill="#787c84" /><rect x="144" y="760" width="211" height="1" fill="#8c8c8e" /><rect x="144" y="720" width="1" height="72" fill="#8a8a8c" /><rect x="162" y="720" width="1" height="72" fill="#a6a8ae" /><rect x="179" y="720" width="1" height="72" fill="#a6a8ae" /><rect x="197" y="720" width="1" height="72" fill="#a6a8ae" /><rect x="215" y="720" width="1" height="72" fill="#8a8a8c" /><rect x="232" y="720" width="1" height="72" fill="#a6a8ae" /><rect x="250" y="720" width="1" height="72" fill="#a6a8ae" /><rect x="267" y="720" width="1" height="72" fill="#a6a8ae" /><rect x="285" y="720" width="1" height="72" fill="#8a8a8c" /><rect x="303" y="720" width="1" height="72" fill="#a6a8ae" /><rect x="320" y="720" width="1" height="72" fill="#a6a8ae" /><rect x="338" y="720" width="1" height="72" fill="#a6a8ae" /><rect x="355" y="720" width="1" height="72" fill="#8a8a8c" /><rect x="373" y="720" width="1" height="72" fill="#a6a8ae" /><rect x="391" y="720" width="1" height="72" fill="#a6a8ae" /><rect x="408" y="720" width="1" height="72" fill="#a6a8ae" /><rect x="426" y="720" width="1" height="72" fill="#8a8a8c" /><rect x="443" y="720" width="1" height="72" fill="#a6a8ae" /><rect x="461" y="720" width="1" height="72" fill="#a6a8ae" /><rect x="479" y="720" width="1" height="72" fill="#a6a8ae" /><rect x="496" y="720" width="1" height="72" fill="#8a8a8c" /><rect x="514" y="720" width="1" height="72" fill="#a6a8ae" /><rect x="531" y="720" width="1" height="72" fill="#a6a8ae" /><rect x="549" y="720" width="1" height="72" fill="#a6a8ae" /><rect x="567" y="720" width="1" height="72" fill="#8a8a8c" /><rect x="584" y="720" width="1" height="72" fill="#a6a8ae" /><rect x="602" y="720" width="1" height="72" fill="#a6a8ae" /><rect x="619" y="720" width="1" height="72" fill="#a6a8ae" /><rect x="637" y="720" width="1" height="72" fill="#8a8a8c" /><rect x="655" y="720" width="1" height="72" fill="#a6a8ae" /><rect x="672" y="720" width="1" height="72" fill="#a6a8ae" /><rect x="690" y="720" width="1" height="72" fill="#a6a8ae" /><rect x="707" y="720" width="1" height="72" fill="#8a8a8c" /><rect x="725" y="720" width="1" height="72" fill="#a6a8ae" /><rect x="743" y="720" width="1" height="72" fill="#a6a8ae" /><rect x="760" y="720" width="1" height="72" fill="#a6a8ae" /><rect x="778" y="720" width="1" height="72" fill="#8a8a8c" /><rect x="795" y="720" width="1" height="72" fill="#a6a8ae" /><rect x="813" y="720" width="1" height="72" fill="#a6a8ae" /><rect x="831" y="720" width="1" height="72" fill="#a6a8ae" /><rect x="848" y="720" width="1" height="72" fill="#8a8a8c" /><rect x="866" y="720" width="1" height="72" fill="#a6a8ae" /><rect x="883" y="720" width="1" height="72" fill="#a6a8ae" /><rect x="901" y="720" width="1" height="72" fill="#a6a8ae" /><rect x="918" y="720" width="1" height="72" fill="#8a8a8c" /><rect x="936" y="720" width="1" height="72" fill="#a6a8ae" /><rect x="954" y="720" width="1" height="72" fill="#a6a8ae" /><rect x="971" y="720" width="1" height="72" fill="#a6a8ae" /><rect x="989" y="720" width="1" height="72" fill="#8a8a8c" /><rect x="1006" y="720" width="1" height="72" fill="#a6a8ae" /><rect x="1024" y="720" width="1" height="72" fill="#a6a8ae" /><rect x="1042" y="720" width="1" height="72" fill="#a6a8ae" /><rect x="1059" y="720" width="1" height="72" fill="#8a8a8c" /><rect x="1077" y="720" width="1" height="72" fill="#a6a8ae" /><rect x="1094" y="720" width="1" height="72" fill="#a6a8ae" /><rect x="1112" y="720" width="1" height="72" fill="#a6a8ae" /><rect x="1130" y="720" width="1" height="72" fill="#8a8a8c" /><rect x="1147" y="720" width="1" height="72" fill="#a6a8ae" /><rect x="1165" y="720" width="1" height="72" fill="#a6a8ae" /><rect x="1182" y="720" width="1" height="72" fill="#a6a8ae" /><rect x="1200" y="720" width="1" height="72" fill="#8a8a8c" /><rect x="1218" y="720" width="1" height="72" fill="#a6a8ae" /><rect x="1235" y="720" width="1" height="72" fill="#a6a8ae" /><rect x="1253" y="720" width="1" height="72" fill="#a6a8ae" /><rect x="1270" y="720" width="1" height="72" fill="#8a8a8c" /><rect x="1288" y="720" width="1" height="72" fill="#a6a8ae" /><rect x="1306" y="720" width="1" height="72" fill="#a6a8ae" /><rect x="1323" y="720" width="1" height="72" fill="#a6a8ae" /><rect x="1341" y="720" width="1" height="72" fill="#8a8a8c" /><rect x="1358" y="720" width="1" height="72" fill="#a6a8ae" /><rect x="1376" y="720" width="1" height="72" fill="#a6a8ae" /><rect x="1394" y="720" width="1" height="72" fill="#a6a8ae" /><rect x="1411" y="720" width="1" height="72" fill="#8a8a8c" /><rect x="1429" y="720" width="1" height="72" fill="#a6a8ae" /><rect x="1446" y="720" width="1" height="72" fill="#a6a8ae" /><rect x="1453" y="134" width="17" height="64" fill="#3e3f44" /><rect x="1453" y="197" width="17" height="595" fill="#303135" /><rect x="1456" y="214" width="11" height="578" fill="#45474c" /><rect x="1465" y="214" width="2" height="578" fill="#3c3e43" /><rect x="1456" y="200" width="11" height="13" fill="#4c4e54" /><path d="M1458.5,208 L1461.5,205 L1464.5,208 Z M1458.5,204 L1461.5,201 L1464.5,204 Z" fill="#d8d8d8" shape-rendering="auto"/><rect x="1456" y="435" width="11" height="199" fill="#6e737c" /><rect x="1471" y="134" width="2" height="658" fill="#313236" /><rect x="1270" y="711" width="1" height="81" fill="#e6e6e0" /></svg>
<svg width="1578" height="792" style="position:absolute;left:0;top:0" font-family="Liberation Sans, sans-serif"><path d="M1483,139 L1490,143 L1483,147 Z" fill="#e8e8e8"/></svg>
</body></html>
